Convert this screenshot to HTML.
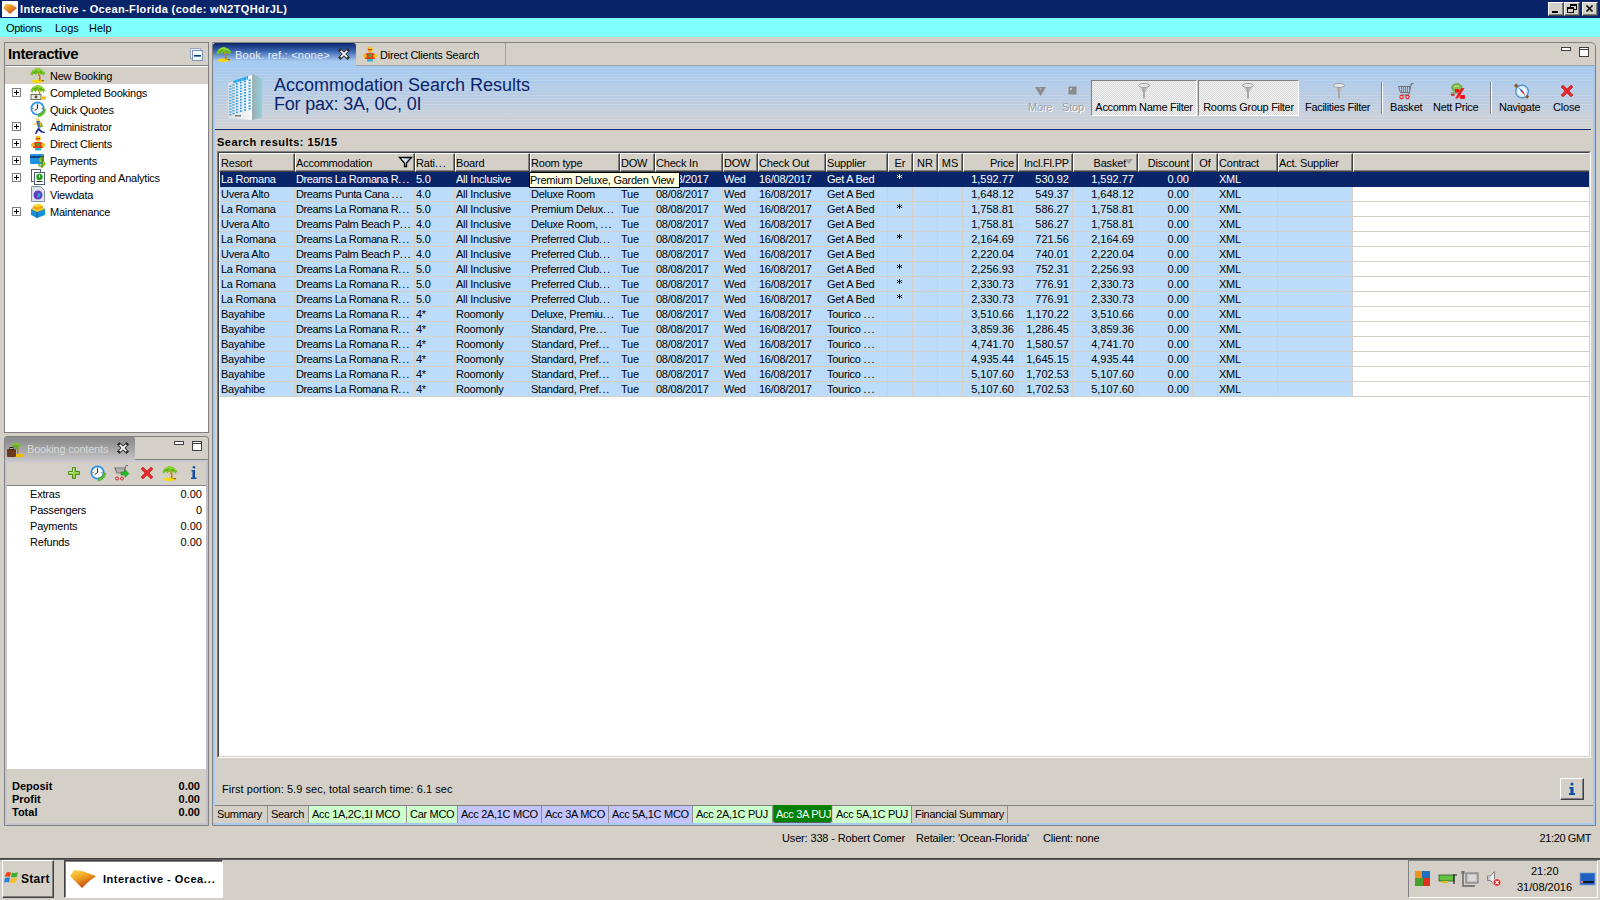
<!DOCTYPE html><html><head><meta charset="utf-8"><style>
*{margin:0;padding:0;box-sizing:border-box}
html,body{width:1600px;height:900px;overflow:hidden;background:#d4d0c8;font-family:"Liberation Sans",sans-serif;font-size:11px;color:#000}
.a{position:absolute}
.t{position:absolute;white-space:nowrap;line-height:11px;font-size:11px}
.b{font-weight:bold}
svg{position:absolute;overflow:visible}
</style></head><body>
<div class="a" style="left:0px;top:0px;width:1600px;height:18px;background:#0a246a"></div>
<div class="a" style="left:2px;top:1px;width:16px;height:16px;background:#fff"></div>
<svg style="left:2px;top:1px" width="16" height="16"><defs><linearGradient id="og" x1="0" y1="0" x2="1" y2="1"><stop offset="0" stop-color="#ffd040"/><stop offset="1" stop-color="#c04010"/></linearGradient></defs><path d="M1 7 L4 3 L10 3.5 L15 7 L8 13 Z" fill="url(#og)"/></svg>
<div class="t b" style="left:20px;top:4px;color:#fff;letter-spacing:0.35px">Interactive - Ocean-Florida (code: wN2TQHdrJL)</div>
<div class="a" style="left:1548px;top:2px;width:16px;height:14px;background:#d4d0c8;border-top:1px solid #fff;border-left:1px solid #fff;border-right:1px solid #404040;border-bottom:1px solid #404040;box-shadow:inset -1px -1px 0 #808080"></div>
<div class="a" style="left:1564px;top:2px;width:16px;height:14px;background:#d4d0c8;border-top:1px solid #fff;border-left:1px solid #fff;border-right:1px solid #404040;border-bottom:1px solid #404040;box-shadow:inset -1px -1px 0 #808080"></div>
<div class="a" style="left:1582px;top:2px;width:16px;height:14px;background:#d4d0c8;border-top:1px solid #fff;border-left:1px solid #fff;border-right:1px solid #404040;border-bottom:1px solid #404040;box-shadow:inset -1px -1px 0 #808080"></div>
<svg style="left:1548px;top:2px" width="16" height="14"><rect x="4" y="9" width="6" height="2" fill="#000"/></svg>
<svg style="left:1564px;top:2px" width="16" height="14"><rect x="6.5" y="2.5" width="6" height="5" fill="none" stroke="#000"/><rect x="6" y="2" width="7" height="2" fill="#000"/><rect x="3.5" y="5.5" width="6" height="5" fill="#d4d0c8" stroke="#000"/><rect x="3" y="5" width="7" height="2" fill="#000"/></svg>
<svg style="left:1582px;top:2px" width="16" height="14"><path d="M4.5 3.5 L10.5 9.5 M10.5 3.5 L4.5 9.5" stroke="#000" stroke-width="1.6"/></svg>
<div class="a" style="left:0px;top:18px;width:1600px;height:19px;background:#80ffff"></div>
<div class="t " style="left:6px;top:23px;letter-spacing:-0.3px">Options</div>
<div class="t " style="left:55px;top:23px;">Logs</div>
<div class="t " style="left:89px;top:23px;">Help</div>
<div class="a" style="left:4px;top:42px;width:205px;height:391px;border:1px solid #808080;background:#d4d0c8"></div>
<div class="a" style="left:5px;top:66px;width:203px;height:366px;background:#fff"></div>
<div class="a" style="left:5px;top:65px;width:203px;height:1px;background:#808080"></div>
<div class="t b" style="left:8px;top:46px;font-size:15px;line-height:15px;letter-spacing:-0.45px">Interactive</div>
<svg style="left:190px;top:48px" width="14" height="14"><rect x="0.5" y="0.5" width="10" height="10" fill="#e0f4ff" stroke="#99a8c4"/><rect x="2.5" y="2.5" width="10" height="10" fill="#f0faff" stroke="#8090b0"/><rect x="4" y="7" width="7" height="1.6" fill="#0a3a7a"/></svg>
<div class="a" style="left:5px;top:67px;width:203px;height:17px;background:#d4d0c8"></div>
<div class="t " style="left:50px;top:71px;letter-spacing:-0.25px">New Booking</div>
<svg style="left:30px;top:67px" width="16" height="16" viewBox="0 0 16 16"><path d="M1 14 Q8 11.5 15 13.5 Q12 16 8 16 Q3 16 1 14Z" fill="#f8d800"/><path d="M11 13.5 L14 13 L13 14.5Z" fill="#503010"/><path d="M7.5 6 Q9.5 9 9 14 L10.5 14 Q11 9 9 6Z" fill="#d08818"/><path d="M9 8.5 L10 9.5 M9.2 11 L10.2 12" stroke="#904010" stroke-width="0.8"/><path d="M0.5 8 Q1 2.5 7 1 Q13.5 1 15.5 7.5 L14 7 L13.5 9.5 L12 6.5 L10.5 8 L9 6 L7 6.5 L5.5 8.5 L4.5 6.5 L3 7 L2 9.5 L1.5 7.5Z" fill="#70c020"/><path d="M3 4 Q6 1.5 9 2 M8 3 Q12 2.5 14 5" stroke="#a0e050" stroke-width="1" fill="none"/><path d="M4 6 L6 4 M10 4 L12 6" stroke="#4a9010" stroke-width="0.8"/></svg>
<div class="t " style="left:50px;top:88px;letter-spacing:-0.25px">Completed Bookings</div>
<svg style="left:12px;top:88px" width="9" height="9"><rect x="0.5" y="0.5" width="8" height="8" fill="#fff" stroke="#808080"/><path d="M2 4.5 H7 M4.5 2 V7" stroke="#000"/></svg>
<svg style="left:30px;top:84px" width="16" height="16" viewBox="0 0 16 16"><path d="M7.5 6 Q9.5 8 9 11 L10.5 11 Q11 8 9 6Z" fill="#d08818"/><path d="M0.5 8 Q1 2.5 7 1 Q13.5 1 15.5 7.5 L14 7 L13.5 9.5 L12 6.5 L10.5 8 L9 6 L7 6.5 L5.5 8.5 L4.5 6.5 L3 7 L2 9.5 L1.5 7.5Z" fill="#70c020"/><path d="M3 4 Q6 1.5 9 2 M8 3 Q12 2.5 14 5" stroke="#a0e050" stroke-width="1" fill="none"/><path d="M4 6 L6 4 M10 4 L12 6" stroke="#4a9010" stroke-width="0.8"/><rect x="1" y="10.5" width="10" height="5" fill="#e8e8d8" stroke="#707060" stroke-width="1"/><circle cx="6" cy="13" r="1.4" fill="#505040"/><path d="M11 12.5 H16 V15.5 H11Z" fill="#f0c000"/></svg>
<div class="t " style="left:50px;top:105px;letter-spacing:-0.25px">Quick Quotes</div>
<svg style="left:30px;top:101px" width="16" height="16" viewBox="0 0 16 16"><circle cx="7.5" cy="7.5" r="7" fill="#1a90f0"/><circle cx="7.5" cy="7.5" r="5.3" fill="#fafafa" stroke="#b8c8d8" stroke-width="0.6"/><path d="M7.5 3.5 V7.5 L4.8 9.5" stroke="#202020" fill="none" stroke-width="1"/><circle cx="7.5" cy="3" r="0.6" fill="#404040"/><circle cx="3" cy="7.5" r="0.6" fill="#404040"/><circle cx="12" cy="7.5" r="0.6" fill="#404040"/><path d="M15.5 8 Q15.5 13 11 15 L8 16 L9 12.5 L12 12 Q13.5 10.5 13.5 8Z" fill="#60c828" stroke="#389010" stroke-width="0.5"/></svg>
<div class="t " style="left:50px;top:122px;letter-spacing:-0.25px">Administrator</div>
<svg style="left:12px;top:122px" width="9" height="9"><rect x="0.5" y="0.5" width="8" height="8" fill="#fff" stroke="#808080"/><path d="M2 4.5 H7 M4.5 2 V7" stroke="#000"/></svg>
<svg style="left:30px;top:118px" width="16" height="16" viewBox="0 0 16 16"><path d="M6 0 L9 1 L10 3 L7 3Z" fill="#f8c828"/><path d="M6 3 L10 3 L12 9 L8 10Z" fill="#4870b0"/><path d="M9 4 L12 5 L13 9 L10 9Z" fill="#60a838"/><path d="M10 4 L11 8" stroke="#f0c020" stroke-width="1.2"/><path d="M3 6 L7 5 L7 6.5 L3 7Z" fill="#f8c828"/><path d="M8 10 L6 13 L5 16 L6.5 16 L8 13 L10 11Z" fill="#1a2a90"/><path d="M9 10 L12 13 L15 14 L15 15 L11 14.5 L8 12Z" fill="#1a2a90"/></svg>
<div class="t " style="left:50px;top:139px;letter-spacing:-0.25px">Direct Clients</div>
<svg style="left:12px;top:139px" width="9" height="9"><rect x="0.5" y="0.5" width="8" height="8" fill="#fff" stroke="#808080"/><path d="M2 4.5 H7 M4.5 2 V7" stroke="#000"/></svg>
<svg style="left:30px;top:135px" width="16" height="16" viewBox="0 0 16 16"><circle cx="8" cy="3.5" r="2.8" fill="#f8c020"/><rect x="6" y="3" width="4" height="1.2" fill="#c04010"/><path d="M3 8 Q8 5.5 13 8 L13 13 L3 13Z" fill="#f03818"/><circle cx="2.8" cy="10" r="2" fill="#f8c020"/><circle cx="13.2" cy="10" r="2" fill="#f8c020"/><rect x="6.5" y="8" width="3.5" height="3" fill="#38b030"/><rect x="5" y="13" width="6" height="2.5" fill="#28b8c8"/></svg>
<div class="t " style="left:50px;top:156px;letter-spacing:-0.25px">Payments</div>
<svg style="left:12px;top:156px" width="9" height="9"><rect x="0.5" y="0.5" width="8" height="8" fill="#fff" stroke="#808080"/><path d="M2 4.5 H7 M4.5 2 V7" stroke="#000"/></svg>
<svg style="left:30px;top:152px" width="16" height="16" viewBox="0 0 16 16"><rect x="0" y="2" width="14" height="10" rx="1" fill="#2090e0"/><rect x="0" y="4" width="14" height="2" fill="#104080"/><path d="M13 5 Q9 5 9 8 Q9 10 12 10.5 Q14 11 13 13 Q11 14 9 12 L8 13.5 Q10 15.5 13 14.5 Q16 13 15 10.5 Q14 9 11.5 8.5 Q10.5 8 11 7 Q12 6 14 7Z" fill="#a8d828" stroke="#5a8a10" stroke-width="0.5"/><rect x="11.5" y="3.5" width="1.2" height="12.5" fill="#5a8a10"/></svg>
<div class="t " style="left:50px;top:173px;letter-spacing:-0.25px">Reporting and Analytics</div>
<svg style="left:12px;top:173px" width="9" height="9"><rect x="0.5" y="0.5" width="8" height="8" fill="#fff" stroke="#808080"/><path d="M2 4.5 H7 M4.5 2 V7" stroke="#000"/></svg>
<svg style="left:30px;top:169px" width="16" height="16" viewBox="0 0 16 16"><rect x="1.5" y="0.5" width="9" height="12" fill="#fff" stroke="#506070"/><rect x="4.5" y="3.5" width="10" height="12" fill="#fff" stroke="#506070"/><circle cx="9.5" cy="8" r="3.2" fill="#20a020"/><rect x="9" y="6" width="1" height="2.5" fill="#fff"/><rect x="6.5" y="12" width="6" height="1" fill="#303030"/></svg>
<div class="t " style="left:50px;top:190px;letter-spacing:-0.25px">Viewdata</div>
<svg style="left:30px;top:186px" width="16" height="16" viewBox="0 0 16 16"><path d="M1.5 0.5 H10.5 L14.5 4.5 V15.5 H1.5Z" fill="#dde4ee" stroke="#8090a0"/><circle cx="8" cy="9" r="4.5" fill="#6040c0"/><path d="M6 6 Q9 7 8 9 Q6 10 8 12 Q10 11 11 8" fill="#30a0e0"/></svg>
<div class="t " style="left:50px;top:207px;letter-spacing:-0.25px">Maintenance</div>
<svg style="left:12px;top:207px" width="9" height="9"><rect x="0.5" y="0.5" width="8" height="8" fill="#fff" stroke="#808080"/><path d="M2 4.5 H7 M4.5 2 V7" stroke="#000"/></svg>
<svg style="left:30px;top:203px" width="16" height="16" viewBox="0 0 16 16"><path d="M1 6 L10 3 L15 6 L15 12 L7 15 L1 12Z" fill="#1890d8"/><path d="M1 6 L10 3 L15 6 L7 9Z" fill="#f8c820"/><path d="M2 4 L10 1.5 L14 4 L7 7Z" fill="#f0a010"/><path d="M3 2 L9 0.5 L13 2.5 L7 4.5Z" fill="#f8d830"/><path d="M7 9 V15" stroke="#0a60a0"/></svg>
<div class="a" style="left:4px;top:436px;width:205px;height:390px;border:1px solid #808080;border-radius:3px 3px 0 0;background:#d4d0c8"></div>
<div class="a" style="left:5px;top:437px;width:130px;height:23px;background:linear-gradient(#8a8a8a,#9c9c9c 40%,#c4c4c4);border-radius:2px 2px 0 0"></div>
<div class="a" style="left:135px;top:459px;width:73px;height:1px;background:#808080"></div>
<svg style="left:7px;top:441px" width="16" height="16" viewBox="0 0 16 16"><path d="M6 7 Q8 2 12 4 Q9 5 9 8" fill="none" stroke="#60b020" stroke-width="2"/><path d="M5 4 Q9 1 14 5" stroke="#80c830" fill="none" stroke-width="1.5"/><rect x="10" y="6" width="1.5" height="8" fill="#c08020"/><rect x="0" y="8" width="9" height="8" rx="1" fill="#6a3a1a"/><rect x="3" y="6.5" width="3" height="2" fill="none" stroke="#3a2010"/><path d="M9 13 H16 V16 H9Z" fill="#f0c000"/></svg>
<div class="t " style="left:27px;top:444px;color:#d8d8d8;letter-spacing:-0.2px">Booking contents</div>
<svg style="left:117px;top:442px" width="12" height="12"><path d="M2.5 2.5 L9.5 9.5 M9.5 2.5 L2.5 9.5" stroke="#303030" stroke-width="3.6" stroke-linecap="square"/><path d="M2.8 2.8 L9.2 9.2 M9.2 2.8 L2.8 9.2" stroke="#fff" stroke-width="1.8"/></svg>
<svg style="left:174px;top:441px" width="30" height="12"><rect x="0.5" y="0.5" width="9" height="3" fill="#fff" stroke="#404040"/><rect x="18.5" y="0.5" width="9" height="9" fill="#fff" stroke="#404040"/><rect x="18.5" y="0.5" width="9" height="2" fill="#fff" stroke="#404040"/></svg>
<div class="a" style="left:5px;top:460px;width:203px;height:365px;border:2px solid #c8c6d0;border-right-color:#c0bec8"></div>
<div class="a" style="left:7px;top:486px;width:199px;height:283px;background:#fff"></div>
<div class="a" style="left:7px;top:485px;width:199px;height:1px;background:#808080"></div>
<svg style="left:66px;top:465px" width="16" height="16" viewBox="0 0 16 16"><path d="M6.5 2.5 H9.5 V6.5 H13.5 V9.5 H9.5 V13.5 H6.5 V9.5 H2.5 V6.5 H6.5Z" fill="#98d050" stroke="#4a8a20" stroke-width="1"/><path d="M7 3 H8 V7 H3 V8 H7Z" fill="#c8f090"/></svg>
<svg style="left:90px;top:465px" width="16" height="16" viewBox="0 0 16 16"><circle cx="7.5" cy="7.5" r="7" fill="#1a90f0"/><circle cx="7.5" cy="7.5" r="5.3" fill="#fafafa" stroke="#b8c8d8" stroke-width="0.6"/><path d="M7.5 3.5 V7.5 L4.8 9.5" stroke="#202020" fill="none" stroke-width="1"/><circle cx="7.5" cy="3" r="0.6" fill="#404040"/><circle cx="3" cy="7.5" r="0.6" fill="#404040"/><circle cx="12" cy="7.5" r="0.6" fill="#404040"/><path d="M15.5 8 Q15.5 13 11 15 L8 16 L9 12.5 L12 12 Q13.5 10.5 13.5 8Z" fill="#60c828" stroke="#389010" stroke-width="0.5"/></svg>
<svg style="left:114px;top:465px" width="16" height="16" viewBox="0 0 16 16"><path d="M1 3 H11 L10 8 H3Z" fill="none" stroke="#707070" stroke-width="1.2"/><path d="M3 4 V8 M5 4 V8 M7 4 V8 M9 4 V8" stroke="#909090"/><path d="M11 3 L12 0.5 H14" stroke="#707070" fill="none"/><circle cx="3" cy="13.5" r="1.5" fill="none" stroke="#e02020"/><circle cx="8" cy="13.5" r="1.5" fill="none" stroke="#e02020"/><path d="M7 7 H11 V4.5 L15 8.5 L11 12.5 V10 H7Z" fill="#20c020" stroke="#108010" stroke-width="0.5"/></svg>
<svg style="left:139px;top:465px" width="16" height="16" viewBox="0 0 16 16"><path d="M2 4 L4 2 L8 6 L12 2 L14 4 L10 8 L14 12 L12 14 L8 10 L4 14 L2 12 L6 8Z" fill="#e82828" stroke="#b01010" stroke-width="0.5"/></svg>
<svg style="left:162px;top:465px" width="16" height="16" viewBox="0 0 16 16"><path d="M1 14 Q8 11.5 15 13.5 Q12 16 8 16 Q3 16 1 14Z" fill="#f8d800"/><path d="M11 13.5 L14 13 L13 14.5Z" fill="#503010"/><path d="M7.5 6 Q9.5 9 9 14 L10.5 14 Q11 9 9 6Z" fill="#d08818"/><path d="M9 8.5 L10 9.5 M9.2 11 L10.2 12" stroke="#904010" stroke-width="0.8"/><path d="M0.5 8 Q1 2.5 7 1 Q13.5 1 15.5 7.5 L14 7 L13.5 9.5 L12 6.5 L10.5 8 L9 6 L7 6.5 L5.5 8.5 L4.5 6.5 L3 7 L2 9.5 L1.5 7.5Z" fill="#70c020"/><path d="M3 4 Q6 1.5 9 2 M8 3 Q12 2.5 14 5" stroke="#a0e050" stroke-width="1" fill="none"/><path d="M4 6 L6 4 M10 4 L12 6" stroke="#4a9010" stroke-width="0.8"/></svg>
<svg style="left:186px;top:465px" width="16" height="16" viewBox="0 0 16 16"><circle cx="8" cy="2.3" r="1.3" fill="#1050a8"/><path d="M5.5 5 H9 V12.5 H10.5 V14 H5 V12.5 H6.5 V6.5 H5.5Z" fill="#1050a8"/></svg>
<div class="t " style="left:30px;top:489px;letter-spacing:-0.2px">Extras</div>
<div class="t" style="right:1398px;top:489px">0.00</div>
<div class="t " style="left:30px;top:505px;letter-spacing:-0.2px">Passengers</div>
<div class="t" style="right:1398px;top:505px">0</div>
<div class="t " style="left:30px;top:521px;letter-spacing:-0.2px">Payments</div>
<div class="t" style="right:1398px;top:521px">0.00</div>
<div class="t " style="left:30px;top:537px;letter-spacing:-0.2px">Refunds</div>
<div class="t" style="right:1398px;top:537px">0.00</div>
<div class="t b" style="left:12px;top:781px;">Deposit</div>
<div class="t b" style="right:1400px;top:781px">0.00</div>
<div class="t b" style="left:12px;top:794px;">Profit</div>
<div class="t b" style="right:1400px;top:794px">0.00</div>
<div class="t b" style="left:12px;top:807px;">Total</div>
<div class="t b" style="right:1400px;top:807px">0.00</div>
<div class="a" style="left:212px;top:42px;width:1384px;height:784px;border:1px solid #808080;border-radius:0 5px 0 0;background:#d4d0c8"></div>
<div class="a" style="left:213px;top:65px;width:1382px;height:760px;border:2px solid #a6caf0;border-top:none;background:#d4d0c8"></div>
<div class="a" style="left:213px;top:65px;width:1382px;height:1px;background:#a6caf0"></div>
<div class="a" style="left:213px;top:43px;width:143px;height:23px;background:linear-gradient(#0a246a 0px,#3a64b0 8px,#a6caf0 18px,#a6caf0 23px);border-radius:3px 3px 0 0"></div>
<svg style="left:216px;top:46px" width="16" height="16" viewBox="0 0 16 16"><path d="M1 14 Q8 11.5 15 13.5 Q12 16 8 16 Q3 16 1 14Z" fill="#f8d800"/><path d="M11 13.5 L14 13 L13 14.5Z" fill="#503010"/><path d="M7.5 6 Q9.5 9 9 14 L10.5 14 Q11 9 9 6Z" fill="#d08818"/><path d="M9 8.5 L10 9.5 M9.2 11 L10.2 12" stroke="#904010" stroke-width="0.8"/><path d="M0.5 8 Q1 2.5 7 1 Q13.5 1 15.5 7.5 L14 7 L13.5 9.5 L12 6.5 L10.5 8 L9 6 L7 6.5 L5.5 8.5 L4.5 6.5 L3 7 L2 9.5 L1.5 7.5Z" fill="#70c020"/><path d="M3 4 Q6 1.5 9 2 M8 3 Q12 2.5 14 5" stroke="#a0e050" stroke-width="1" fill="none"/><path d="M4 6 L6 4 M10 4 L12 6" stroke="#4a9010" stroke-width="0.8"/></svg>
<div class="t " style="left:235px;top:50px;color:#e8eef8;letter-spacing:0.25px">Book. ref.: &lt;none&gt;</div>
<svg style="left:338px;top:48px" width="12" height="12"><path d="M2.5 2.5 L9.5 9.5 M9.5 2.5 L2.5 9.5" stroke="#303030" stroke-width="3.6" stroke-linecap="square"/><path d="M2.8 2.8 L9.2 9.2 M9.2 2.8 L2.8 9.2" stroke="#fff" stroke-width="1.8"/></svg>
<div class="a" style="left:356px;top:43px;width:150px;height:23px;border-right:1px solid #a0a0a0;border-bottom:1px solid #a0a0a0;background:#d4d0c8"></div>
<div class="a" style="left:505px;top:65px;width:1089px;height:1px;background:#a0a0a0"></div>
<svg style="left:362px;top:46px" width="16" height="16" viewBox="0 0 16 16"><circle cx="8" cy="3.5" r="2.8" fill="#f8c020"/><rect x="6" y="3" width="4" height="1.2" fill="#c04010"/><path d="M3 8 Q8 5.5 13 8 L13 13 L3 13Z" fill="#f03818"/><circle cx="2.8" cy="10" r="2" fill="#f8c020"/><circle cx="13.2" cy="10" r="2" fill="#f8c020"/><rect x="6.5" y="8" width="3.5" height="3" fill="#38b030"/><rect x="5" y="13" width="6" height="2.5" fill="#28b8c8"/></svg>
<div class="t " style="left:380px;top:50px;letter-spacing:-0.2px">Direct Clients Search</div>
<svg style="left:1561px;top:47px" width="30" height="12"><rect x="0.5" y="0.5" width="9" height="3" fill="#fff" stroke="#404040"/><rect x="18.5" y="0.5" width="9" height="9" fill="#fff" stroke="#404040"/><rect x="18.5" y="0.5" width="9" height="2" fill="#fff" stroke="#404040"/></svg>
<div class="a" style="left:215px;top:66px;width:1378px;height:63px;background:linear-gradient(#a6caf0,#b8cce4 45%,#d2d2d4);"></div>
<div class="a" style="left:215px;top:66px;width:1378px;height:63px;background:repeating-linear-gradient(#0000 0px,#0000 2px,rgba(255,255,255,0.12) 2px,rgba(255,255,255,0.12) 3px)"></div>
<div class="a" style="left:215px;top:129px;width:1376px;height:1px;background:#0a246a"></div>
<svg style="left:226px;top:73px" width="38" height="49"><defs><linearGradient id="bside" x1="0" x2="1"><stop offset="0" stop-color="#a0acb0"/><stop offset="1" stop-color="#90d0dc"/></linearGradient><linearGradient id="bfront" x1="0" x2="1"><stop offset="0" stop-color="#d8dcdc"/><stop offset="1" stop-color="#f8fafa"/></linearGradient></defs><path d="M2 10 L26 2 L26 47 L2 45Z" fill="url(#bfront)"/><path d="M26 2 L27 1 L36 6 L36 44 L27 47 L26 47Z" fill="url(#bside)"/><path d="M7 8 L22 3 L22 6.5 L7 10.5Z" fill="#28a8f0"/><rect x="3.2" y="12.5" width="2.2" height="1.5" fill="#2898e0"/><rect x="3.2" y="15.3" width="2.2" height="1.5" fill="#2898e0"/><rect x="3.2" y="18.2" width="2.2" height="1.5" fill="#2898e0"/><rect x="3.2" y="21.1" width="2.2" height="1.5" fill="#2898e0"/><rect x="3.2" y="23.9" width="2.2" height="1.5" fill="#2898e0"/><rect x="3.2" y="26.8" width="2.2" height="1.5" fill="#2898e0"/><rect x="3.2" y="29.6" width="2.2" height="1.5" fill="#2898e0"/><rect x="3.2" y="32.5" width="2.2" height="1.5" fill="#2898e0"/><rect x="3.2" y="35.3" width="2.2" height="1.5" fill="#2898e0"/><rect x="3.2" y="38.2" width="2.2" height="1.5" fill="#2898e0"/><rect x="3.2" y="41.0" width="2.2" height="1.5" fill="#2898e0"/><rect x="6.4" y="11.3" width="2.2" height="1.5" fill="#2898e0"/><rect x="6.4" y="14.2" width="2.2" height="1.5" fill="#2898e0"/><rect x="6.4" y="17.0" width="2.2" height="1.5" fill="#2898e0"/><rect x="6.4" y="19.9" width="2.2" height="1.5" fill="#2898e0"/><rect x="6.4" y="22.7" width="2.2" height="1.5" fill="#2898e0"/><rect x="6.4" y="25.6" width="2.2" height="1.5" fill="#2898e0"/><rect x="6.4" y="28.4" width="2.2" height="1.5" fill="#2898e0"/><rect x="6.4" y="31.2" width="2.2" height="1.5" fill="#2898e0"/><rect x="6.4" y="34.1" width="2.2" height="1.5" fill="#2898e0"/><rect x="6.4" y="37.0" width="2.2" height="1.5" fill="#2898e0"/><rect x="6.4" y="39.8" width="2.2" height="1.5" fill="#2898e0"/><rect x="10" y="10.1" width="2.2" height="1.5" fill="#2898e0"/><rect x="10" y="12.9" width="2.2" height="1.5" fill="#2898e0"/><rect x="10" y="15.8" width="2.2" height="1.5" fill="#2898e0"/><rect x="10" y="18.6" width="2.2" height="1.5" fill="#2898e0"/><rect x="10" y="21.5" width="2.2" height="1.5" fill="#2898e0"/><rect x="10" y="24.4" width="2.2" height="1.5" fill="#2898e0"/><rect x="10" y="27.2" width="2.2" height="1.5" fill="#2898e0"/><rect x="10" y="30.0" width="2.2" height="1.5" fill="#2898e0"/><rect x="10" y="32.9" width="2.2" height="1.5" fill="#2898e0"/><rect x="10" y="35.8" width="2.2" height="1.5" fill="#2898e0"/><rect x="10" y="38.6" width="2.2" height="1.5" fill="#2898e0"/><rect x="14" y="8.9" width="2.2" height="1.5" fill="#2898e0"/><rect x="14" y="11.8" width="2.2" height="1.5" fill="#2898e0"/><rect x="14" y="14.6" width="2.2" height="1.5" fill="#2898e0"/><rect x="14" y="17.5" width="2.2" height="1.5" fill="#2898e0"/><rect x="14" y="20.3" width="2.2" height="1.5" fill="#2898e0"/><rect x="14" y="23.1" width="2.2" height="1.5" fill="#2898e0"/><rect x="14" y="26.0" width="2.2" height="1.5" fill="#2898e0"/><rect x="14" y="28.9" width="2.2" height="1.5" fill="#2898e0"/><rect x="14" y="31.7" width="2.2" height="1.5" fill="#2898e0"/><rect x="14" y="34.6" width="2.2" height="1.5" fill="#2898e0"/><rect x="14" y="37.4" width="2.2" height="1.5" fill="#2898e0"/><rect x="18" y="7.7" width="2.2" height="1.5" fill="#2898e0"/><rect x="18" y="10.6" width="2.2" height="1.5" fill="#2898e0"/><rect x="18" y="13.4" width="2.2" height="1.5" fill="#2898e0"/><rect x="18" y="16.2" width="2.2" height="1.5" fill="#2898e0"/><rect x="18" y="19.1" width="2.2" height="1.5" fill="#2898e0"/><rect x="18" y="21.9" width="2.2" height="1.5" fill="#2898e0"/><rect x="18" y="24.8" width="2.2" height="1.5" fill="#2898e0"/><rect x="18" y="27.6" width="2.2" height="1.5" fill="#2898e0"/><rect x="18" y="30.5" width="2.2" height="1.5" fill="#2898e0"/><rect x="18" y="33.4" width="2.2" height="1.5" fill="#2898e0"/><rect x="18" y="36.2" width="2.2" height="1.5" fill="#2898e0"/><rect x="22.5" y="6.5" width="2.2" height="1.5" fill="#2898e0"/><rect x="22.5" y="9.3" width="2.2" height="1.5" fill="#2898e0"/><rect x="22.5" y="12.2" width="2.2" height="1.5" fill="#2898e0"/><rect x="22.5" y="15.1" width="2.2" height="1.5" fill="#2898e0"/><rect x="22.5" y="17.9" width="2.2" height="1.5" fill="#2898e0"/><rect x="22.5" y="20.8" width="2.2" height="1.5" fill="#2898e0"/><rect x="22.5" y="23.6" width="2.2" height="1.5" fill="#2898e0"/><rect x="22.5" y="26.4" width="2.2" height="1.5" fill="#2898e0"/><rect x="22.5" y="29.3" width="2.2" height="1.5" fill="#2898e0"/><rect x="22.5" y="32.2" width="2.2" height="1.5" fill="#2898e0"/><rect x="22.5" y="35.0" width="2.2" height="1.5" fill="#2898e0"/><rect x="9" y="42" width="6" height="1.5" fill="#707070"/><path d="M4 10 V45 M8 9 V45 M12 7.5 V46 M16 6 V46 M20.5 4.5 V46" stroke="#ffffff" stroke-width="0.6" opacity="0.6"/></svg>
<div class="t " style="left:274px;top:76px;font-size:18px;line-height:18px;color:#0a246a;letter-spacing:0px">Accommodation Search Results</div>
<div class="t " style="left:274px;top:95px;font-size:18px;line-height:18px;color:#0a246a;letter-spacing:-0.2px">For pax: 3A, 0C, 0I</div>
<div class="t b" style="left:217px;top:137px;letter-spacing:0.5px">Search results: 15/15</div>
<div class="a" style="left:217px;top:151px;width:1374px;height:607px;border:1px solid;border-color:#808080 #fff #fff #808080;background:#fff"></div>
<div class="a" style="left:218px;top:152px;width:1372px;height:605px;border:1px solid;border-color:#404040 #d4d0c8 #d4d0c8 #404040;background:#fff"></div>
<div class="a" style="left:219px;top:153px;width:1370px;height:19px;background:#d4d0c8"></div>
<div class="a" style="left:219px;top:153px;width:76px;height:19px;border-left:1px solid #fff;border-top:1px solid #fff;border-right:1px solid #404040;border-bottom:1px solid #404040;box-shadow:inset -1px -1px 0 #808080"></div>
<div class="t " style="left:221px;top:158px;letter-spacing:-0.2px">Resort</div>
<div class="a" style="left:295px;top:153px;width:120px;height:19px;border-left:1px solid #fff;border-top:1px solid #fff;border-right:1px solid #404040;border-bottom:1px solid #404040;box-shadow:inset -1px -1px 0 #808080"></div>
<div class="t " style="left:296px;top:158px;letter-spacing:-0.2px">Accommodation</div>
<div class="a" style="left:415px;top:153px;width:40px;height:19px;border-left:1px solid #fff;border-top:1px solid #fff;border-right:1px solid #404040;border-bottom:1px solid #404040;box-shadow:inset -1px -1px 0 #808080"></div>
<div class="t " style="left:416px;top:158px;letter-spacing:-0.2px">Rati<span style="letter-spacing:0.9px">..</span>.</div>
<div class="a" style="left:455px;top:153px;width:75px;height:19px;border-left:1px solid #fff;border-top:1px solid #fff;border-right:1px solid #404040;border-bottom:1px solid #404040;box-shadow:inset -1px -1px 0 #808080"></div>
<div class="t " style="left:456px;top:158px;letter-spacing:-0.2px">Board</div>
<div class="a" style="left:530px;top:153px;width:90px;height:19px;border-left:1px solid #fff;border-top:1px solid #fff;border-right:1px solid #404040;border-bottom:1px solid #404040;box-shadow:inset -1px -1px 0 #808080"></div>
<div class="t " style="left:531px;top:158px;letter-spacing:-0.2px">Room type</div>
<div class="a" style="left:620px;top:153px;width:35px;height:19px;border-left:1px solid #fff;border-top:1px solid #fff;border-right:1px solid #404040;border-bottom:1px solid #404040;box-shadow:inset -1px -1px 0 #808080"></div>
<div class="t " style="left:621px;top:158px;letter-spacing:-0.2px">DOW</div>
<div class="a" style="left:655px;top:153px;width:68px;height:19px;border-left:1px solid #fff;border-top:1px solid #fff;border-right:1px solid #404040;border-bottom:1px solid #404040;box-shadow:inset -1px -1px 0 #808080"></div>
<div class="t " style="left:656px;top:158px;letter-spacing:-0.2px">Check In</div>
<div class="a" style="left:723px;top:153px;width:35px;height:19px;border-left:1px solid #fff;border-top:1px solid #fff;border-right:1px solid #404040;border-bottom:1px solid #404040;box-shadow:inset -1px -1px 0 #808080"></div>
<div class="t " style="left:724px;top:158px;letter-spacing:-0.2px">DOW</div>
<div class="a" style="left:758px;top:153px;width:68px;height:19px;border-left:1px solid #fff;border-top:1px solid #fff;border-right:1px solid #404040;border-bottom:1px solid #404040;box-shadow:inset -1px -1px 0 #808080"></div>
<div class="t " style="left:759px;top:158px;letter-spacing:-0.2px">Check Out</div>
<div class="a" style="left:826px;top:153px;width:62px;height:19px;border-left:1px solid #fff;border-top:1px solid #fff;border-right:1px solid #404040;border-bottom:1px solid #404040;box-shadow:inset -1px -1px 0 #808080"></div>
<div class="t " style="left:827px;top:158px;letter-spacing:-0.2px">Supplier</div>
<div class="a" style="left:888px;top:153px;width:25px;height:19px;border-left:1px solid #fff;border-top:1px solid #fff;border-right:1px solid #404040;border-bottom:1px solid #404040;box-shadow:inset -1px -1px 0 #808080"></div>
<div class="t" style="left:888px;width:24px;text-align:center;top:158px">Er</div>
<div class="a" style="left:913px;top:153px;width:25px;height:19px;border-left:1px solid #fff;border-top:1px solid #fff;border-right:1px solid #404040;border-bottom:1px solid #404040;box-shadow:inset -1px -1px 0 #808080"></div>
<div class="t" style="left:913px;width:24px;text-align:center;top:158px">NR</div>
<div class="a" style="left:938px;top:153px;width:25px;height:19px;border-left:1px solid #fff;border-top:1px solid #fff;border-right:1px solid #404040;border-bottom:1px solid #404040;box-shadow:inset -1px -1px 0 #808080"></div>
<div class="t" style="left:938px;width:24px;text-align:center;top:158px">MS</div>
<div class="a" style="left:963px;top:153px;width:55px;height:19px;border-left:1px solid #fff;border-top:1px solid #fff;border-right:1px solid #404040;border-bottom:1px solid #404040;box-shadow:inset -1px -1px 0 #808080"></div>
<div class="t" style="right:586px;top:158px;letter-spacing:-0.2px">Price</div>
<div class="a" style="left:1018px;top:153px;width:55px;height:19px;border-left:1px solid #fff;border-top:1px solid #fff;border-right:1px solid #404040;border-bottom:1px solid #404040;box-shadow:inset -1px -1px 0 #808080"></div>
<div class="t" style="right:531px;top:158px;letter-spacing:-0.2px">Incl.Fl.PP</div>
<div class="a" style="left:1073px;top:153px;width:65px;height:19px;border-left:1px solid #fff;border-top:1px solid #fff;border-right:1px solid #404040;border-bottom:1px solid #404040;box-shadow:inset -1px -1px 0 #808080"></div>
<div class="t" style="right:474px;top:158px;letter-spacing:-0.2px">Basket</div>
<div class="a" style="left:1138px;top:153px;width:55px;height:19px;border-left:1px solid #fff;border-top:1px solid #fff;border-right:1px solid #404040;border-bottom:1px solid #404040;box-shadow:inset -1px -1px 0 #808080"></div>
<div class="t" style="right:411px;top:158px;letter-spacing:-0.2px">Discount</div>
<div class="a" style="left:1193px;top:153px;width:25px;height:19px;border-left:1px solid #fff;border-top:1px solid #fff;border-right:1px solid #404040;border-bottom:1px solid #404040;box-shadow:inset -1px -1px 0 #808080"></div>
<div class="t" style="left:1193px;width:24px;text-align:center;top:158px">Of</div>
<div class="a" style="left:1218px;top:153px;width:60px;height:19px;border-left:1px solid #fff;border-top:1px solid #fff;border-right:1px solid #404040;border-bottom:1px solid #404040;box-shadow:inset -1px -1px 0 #808080"></div>
<div class="t " style="left:1219px;top:158px;letter-spacing:-0.2px">Contract</div>
<div class="a" style="left:1278px;top:153px;width:75px;height:19px;border-left:1px solid #fff;border-top:1px solid #fff;border-right:1px solid #404040;border-bottom:1px solid #404040;box-shadow:inset -1px -1px 0 #808080"></div>
<div class="t " style="left:1279px;top:158px;letter-spacing:-0.2px">Act. Supplier</div>
<div class="a" style="left:1353px;top:153px;width:236px;height:19px;border-left:1px solid #fff;border-top:1px solid #fff;border-bottom:1px solid #404040;box-shadow:inset 0 -1px 0 #808080"></div>
<svg style="left:398px;top:156px" width="16" height="13"><defs><linearGradient id="hf" x1="0" x2="1"><stop offset="0" stop-color="#ffffff"/><stop offset="0.6" stop-color="#c8d8e8"/><stop offset="1" stop-color="#90b0d8"/></linearGradient></defs><path d="M1.5 1.5 H13.5 L8.5 7 V10.5 H6.5 V7Z" fill="url(#hf)" stroke="#000" stroke-width="1.3" stroke-linejoin="miter"/></svg>
<svg style="left:1125px;top:159px" width="9" height="6"><path d="M0 0 H8 L4 5Z" fill="#a0a0a0"/></svg>
<div class="a" style="left:220px;top:172px;width:1369px;height:15px;background:#0a246a"></div>
<div class="t " style="left:221px;top:174px;color:#fff;letter-spacing:-0.25px;width:73px;overflow:hidden">La Romana</div>
<div class="t " style="left:296px;top:174px;color:#fff;letter-spacing:-0.4px;width:117px;overflow:hidden">Dreams La Romana R<span style="letter-spacing:0.9px">..</span>.</div>
<div class="t " style="left:416px;top:174px;color:#fff;letter-spacing:-0.25px;width:37px;overflow:hidden">5.0</div>
<div class="t " style="left:456px;top:174px;color:#fff;letter-spacing:-0.25px;width:72px;overflow:hidden">All Inclusive</div>
<div class="t " style="left:531px;top:174px;color:#fff;letter-spacing:-0.25px;width:87px;overflow:hidden">Premium Delux<span style="letter-spacing:0.9px">..</span>.</div>
<div class="t " style="left:621px;top:174px;color:#fff;letter-spacing:-0.25px;width:32px;overflow:hidden">Tue</div>
<div class="t " style="left:656px;top:174px;color:#fff;letter-spacing:-0.25px;width:65px;overflow:hidden">08/08/2017</div>
<div class="t " style="left:724px;top:174px;color:#fff;letter-spacing:-0.25px;width:32px;overflow:hidden">Wed</div>
<div class="t " style="left:759px;top:174px;color:#fff;letter-spacing:-0.25px;width:65px;overflow:hidden">16/08/2017</div>
<div class="t " style="left:827px;top:174px;color:#fff;letter-spacing:-0.25px;width:59px;overflow:hidden">Get A Bed</div>
<svg style="left:897px;top:174px" width="5" height="5" shape-rendering="crispEdges"><path d="M2 0h1v5h-1z M0 1h1v1h-1z M4 1h1v1h-1z M0 3h1v1h-1z M4 3h1v1h-1z M1 2h3v1h-3z" fill="#fff"/></svg>
<div class="t" style="right:586px;top:174px;color:#fff">1,592.77</div>
<div class="t" style="right:531px;top:174px;color:#fff">530.92</div>
<div class="t" style="right:466px;top:174px;color:#fff">1,592.77</div>
<div class="t" style="right:411px;top:174px;color:#fff">0.00</div>
<div class="t " style="left:1219px;top:174px;color:#fff;letter-spacing:-0.25px;width:57px;overflow:hidden">XML</div>
<div class="a" style="left:220px;top:187px;width:1133px;height:15px;background:#bcdcfa"></div>
<div class="a" style="left:219px;top:201px;width:1370px;height:1px;background:#d4d0c8"></div>
<div class="a" style="left:294px;top:187px;width:1px;height:15px;background:#d4d0c8"></div>
<div class="a" style="left:414px;top:187px;width:1px;height:15px;background:#d4d0c8"></div>
<div class="a" style="left:454px;top:187px;width:1px;height:15px;background:#d4d0c8"></div>
<div class="a" style="left:529px;top:187px;width:1px;height:15px;background:#d4d0c8"></div>
<div class="a" style="left:619px;top:187px;width:1px;height:15px;background:#d4d0c8"></div>
<div class="a" style="left:654px;top:187px;width:1px;height:15px;background:#d4d0c8"></div>
<div class="a" style="left:722px;top:187px;width:1px;height:15px;background:#d4d0c8"></div>
<div class="a" style="left:757px;top:187px;width:1px;height:15px;background:#d4d0c8"></div>
<div class="a" style="left:825px;top:187px;width:1px;height:15px;background:#d4d0c8"></div>
<div class="a" style="left:887px;top:187px;width:1px;height:15px;background:#d4d0c8"></div>
<div class="a" style="left:912px;top:187px;width:1px;height:15px;background:#d4d0c8"></div>
<div class="a" style="left:937px;top:187px;width:1px;height:15px;background:#d4d0c8"></div>
<div class="a" style="left:962px;top:187px;width:1px;height:15px;background:#d4d0c8"></div>
<div class="a" style="left:1017px;top:187px;width:1px;height:15px;background:#d4d0c8"></div>
<div class="a" style="left:1072px;top:187px;width:1px;height:15px;background:#d4d0c8"></div>
<div class="a" style="left:1137px;top:187px;width:1px;height:15px;background:#d4d0c8"></div>
<div class="a" style="left:1192px;top:187px;width:1px;height:15px;background:#d4d0c8"></div>
<div class="a" style="left:1217px;top:187px;width:1px;height:15px;background:#d4d0c8"></div>
<div class="a" style="left:1277px;top:187px;width:1px;height:15px;background:#d4d0c8"></div>
<div class="a" style="left:1352px;top:187px;width:1px;height:15px;background:#d4d0c8"></div>
<div class="t " style="left:221px;top:189px;color:#000;letter-spacing:-0.25px;width:73px;overflow:hidden">Uvera Alto</div>
<div class="t " style="left:296px;top:189px;color:#000;letter-spacing:-0.4px;width:117px;overflow:hidden">Dreams Punta Cana <span style="letter-spacing:0.9px">..</span>.</div>
<div class="t " style="left:416px;top:189px;color:#000;letter-spacing:-0.25px;width:37px;overflow:hidden">4.0</div>
<div class="t " style="left:456px;top:189px;color:#000;letter-spacing:-0.25px;width:72px;overflow:hidden">All Inclusive</div>
<div class="t " style="left:531px;top:189px;color:#000;letter-spacing:-0.25px;width:87px;overflow:hidden">Deluxe Room</div>
<div class="t " style="left:621px;top:189px;color:#000;letter-spacing:-0.25px;width:32px;overflow:hidden">Tue</div>
<div class="t " style="left:656px;top:189px;color:#000;letter-spacing:-0.25px;width:65px;overflow:hidden">08/08/2017</div>
<div class="t " style="left:724px;top:189px;color:#000;letter-spacing:-0.25px;width:32px;overflow:hidden">Wed</div>
<div class="t " style="left:759px;top:189px;color:#000;letter-spacing:-0.25px;width:65px;overflow:hidden">16/08/2017</div>
<div class="t " style="left:827px;top:189px;color:#000;letter-spacing:-0.25px;width:59px;overflow:hidden">Get A Bed</div>
<div class="t" style="right:586px;top:189px;color:#000">1,648.12</div>
<div class="t" style="right:531px;top:189px;color:#000">549.37</div>
<div class="t" style="right:466px;top:189px;color:#000">1,648.12</div>
<div class="t" style="right:411px;top:189px;color:#000">0.00</div>
<div class="t " style="left:1219px;top:189px;color:#000;letter-spacing:-0.25px;width:57px;overflow:hidden">XML</div>
<div class="a" style="left:220px;top:202px;width:1133px;height:15px;background:#bcdcfa"></div>
<div class="a" style="left:219px;top:216px;width:1370px;height:1px;background:#d4d0c8"></div>
<div class="a" style="left:294px;top:202px;width:1px;height:15px;background:#d4d0c8"></div>
<div class="a" style="left:414px;top:202px;width:1px;height:15px;background:#d4d0c8"></div>
<div class="a" style="left:454px;top:202px;width:1px;height:15px;background:#d4d0c8"></div>
<div class="a" style="left:529px;top:202px;width:1px;height:15px;background:#d4d0c8"></div>
<div class="a" style="left:619px;top:202px;width:1px;height:15px;background:#d4d0c8"></div>
<div class="a" style="left:654px;top:202px;width:1px;height:15px;background:#d4d0c8"></div>
<div class="a" style="left:722px;top:202px;width:1px;height:15px;background:#d4d0c8"></div>
<div class="a" style="left:757px;top:202px;width:1px;height:15px;background:#d4d0c8"></div>
<div class="a" style="left:825px;top:202px;width:1px;height:15px;background:#d4d0c8"></div>
<div class="a" style="left:887px;top:202px;width:1px;height:15px;background:#d4d0c8"></div>
<div class="a" style="left:912px;top:202px;width:1px;height:15px;background:#d4d0c8"></div>
<div class="a" style="left:937px;top:202px;width:1px;height:15px;background:#d4d0c8"></div>
<div class="a" style="left:962px;top:202px;width:1px;height:15px;background:#d4d0c8"></div>
<div class="a" style="left:1017px;top:202px;width:1px;height:15px;background:#d4d0c8"></div>
<div class="a" style="left:1072px;top:202px;width:1px;height:15px;background:#d4d0c8"></div>
<div class="a" style="left:1137px;top:202px;width:1px;height:15px;background:#d4d0c8"></div>
<div class="a" style="left:1192px;top:202px;width:1px;height:15px;background:#d4d0c8"></div>
<div class="a" style="left:1217px;top:202px;width:1px;height:15px;background:#d4d0c8"></div>
<div class="a" style="left:1277px;top:202px;width:1px;height:15px;background:#d4d0c8"></div>
<div class="a" style="left:1352px;top:202px;width:1px;height:15px;background:#d4d0c8"></div>
<div class="t " style="left:221px;top:204px;color:#000;letter-spacing:-0.25px;width:73px;overflow:hidden">La Romana</div>
<div class="t " style="left:296px;top:204px;color:#000;letter-spacing:-0.4px;width:117px;overflow:hidden">Dreams La Romana R<span style="letter-spacing:0.9px">..</span>.</div>
<div class="t " style="left:416px;top:204px;color:#000;letter-spacing:-0.25px;width:37px;overflow:hidden">5.0</div>
<div class="t " style="left:456px;top:204px;color:#000;letter-spacing:-0.25px;width:72px;overflow:hidden">All Inclusive</div>
<div class="t " style="left:531px;top:204px;color:#000;letter-spacing:-0.25px;width:87px;overflow:hidden">Premium Delux<span style="letter-spacing:0.9px">..</span>.</div>
<div class="t " style="left:621px;top:204px;color:#000;letter-spacing:-0.25px;width:32px;overflow:hidden">Tue</div>
<div class="t " style="left:656px;top:204px;color:#000;letter-spacing:-0.25px;width:65px;overflow:hidden">08/08/2017</div>
<div class="t " style="left:724px;top:204px;color:#000;letter-spacing:-0.25px;width:32px;overflow:hidden">Wed</div>
<div class="t " style="left:759px;top:204px;color:#000;letter-spacing:-0.25px;width:65px;overflow:hidden">16/08/2017</div>
<div class="t " style="left:827px;top:204px;color:#000;letter-spacing:-0.25px;width:59px;overflow:hidden">Get A Bed</div>
<svg style="left:897px;top:204px" width="5" height="5" shape-rendering="crispEdges"><path d="M2 0h1v5h-1z M0 1h1v1h-1z M4 1h1v1h-1z M0 3h1v1h-1z M4 3h1v1h-1z M1 2h3v1h-3z" fill="#000"/></svg>
<div class="t" style="right:586px;top:204px;color:#000">1,758.81</div>
<div class="t" style="right:531px;top:204px;color:#000">586.27</div>
<div class="t" style="right:466px;top:204px;color:#000">1,758.81</div>
<div class="t" style="right:411px;top:204px;color:#000">0.00</div>
<div class="t " style="left:1219px;top:204px;color:#000;letter-spacing:-0.25px;width:57px;overflow:hidden">XML</div>
<div class="a" style="left:220px;top:217px;width:1133px;height:15px;background:#bcdcfa"></div>
<div class="a" style="left:219px;top:231px;width:1370px;height:1px;background:#d4d0c8"></div>
<div class="a" style="left:294px;top:217px;width:1px;height:15px;background:#d4d0c8"></div>
<div class="a" style="left:414px;top:217px;width:1px;height:15px;background:#d4d0c8"></div>
<div class="a" style="left:454px;top:217px;width:1px;height:15px;background:#d4d0c8"></div>
<div class="a" style="left:529px;top:217px;width:1px;height:15px;background:#d4d0c8"></div>
<div class="a" style="left:619px;top:217px;width:1px;height:15px;background:#d4d0c8"></div>
<div class="a" style="left:654px;top:217px;width:1px;height:15px;background:#d4d0c8"></div>
<div class="a" style="left:722px;top:217px;width:1px;height:15px;background:#d4d0c8"></div>
<div class="a" style="left:757px;top:217px;width:1px;height:15px;background:#d4d0c8"></div>
<div class="a" style="left:825px;top:217px;width:1px;height:15px;background:#d4d0c8"></div>
<div class="a" style="left:887px;top:217px;width:1px;height:15px;background:#d4d0c8"></div>
<div class="a" style="left:912px;top:217px;width:1px;height:15px;background:#d4d0c8"></div>
<div class="a" style="left:937px;top:217px;width:1px;height:15px;background:#d4d0c8"></div>
<div class="a" style="left:962px;top:217px;width:1px;height:15px;background:#d4d0c8"></div>
<div class="a" style="left:1017px;top:217px;width:1px;height:15px;background:#d4d0c8"></div>
<div class="a" style="left:1072px;top:217px;width:1px;height:15px;background:#d4d0c8"></div>
<div class="a" style="left:1137px;top:217px;width:1px;height:15px;background:#d4d0c8"></div>
<div class="a" style="left:1192px;top:217px;width:1px;height:15px;background:#d4d0c8"></div>
<div class="a" style="left:1217px;top:217px;width:1px;height:15px;background:#d4d0c8"></div>
<div class="a" style="left:1277px;top:217px;width:1px;height:15px;background:#d4d0c8"></div>
<div class="a" style="left:1352px;top:217px;width:1px;height:15px;background:#d4d0c8"></div>
<div class="t " style="left:221px;top:219px;color:#000;letter-spacing:-0.25px;width:73px;overflow:hidden">Uvera Alto</div>
<div class="t " style="left:296px;top:219px;color:#000;letter-spacing:-0.4px;width:117px;overflow:hidden">Dreams Palm Beach P<span style="letter-spacing:0.9px">..</span>.</div>
<div class="t " style="left:416px;top:219px;color:#000;letter-spacing:-0.25px;width:37px;overflow:hidden">4.0</div>
<div class="t " style="left:456px;top:219px;color:#000;letter-spacing:-0.25px;width:72px;overflow:hidden">All Inclusive</div>
<div class="t " style="left:531px;top:219px;color:#000;letter-spacing:-0.25px;width:87px;overflow:hidden">Deluxe Room, <span style="letter-spacing:0.9px">..</span>.</div>
<div class="t " style="left:621px;top:219px;color:#000;letter-spacing:-0.25px;width:32px;overflow:hidden">Tue</div>
<div class="t " style="left:656px;top:219px;color:#000;letter-spacing:-0.25px;width:65px;overflow:hidden">08/08/2017</div>
<div class="t " style="left:724px;top:219px;color:#000;letter-spacing:-0.25px;width:32px;overflow:hidden">Wed</div>
<div class="t " style="left:759px;top:219px;color:#000;letter-spacing:-0.25px;width:65px;overflow:hidden">16/08/2017</div>
<div class="t " style="left:827px;top:219px;color:#000;letter-spacing:-0.25px;width:59px;overflow:hidden">Get A Bed</div>
<div class="t" style="right:586px;top:219px;color:#000">1,758.81</div>
<div class="t" style="right:531px;top:219px;color:#000">586.27</div>
<div class="t" style="right:466px;top:219px;color:#000">1,758.81</div>
<div class="t" style="right:411px;top:219px;color:#000">0.00</div>
<div class="t " style="left:1219px;top:219px;color:#000;letter-spacing:-0.25px;width:57px;overflow:hidden">XML</div>
<div class="a" style="left:220px;top:232px;width:1133px;height:15px;background:#bcdcfa"></div>
<div class="a" style="left:219px;top:246px;width:1370px;height:1px;background:#d4d0c8"></div>
<div class="a" style="left:294px;top:232px;width:1px;height:15px;background:#d4d0c8"></div>
<div class="a" style="left:414px;top:232px;width:1px;height:15px;background:#d4d0c8"></div>
<div class="a" style="left:454px;top:232px;width:1px;height:15px;background:#d4d0c8"></div>
<div class="a" style="left:529px;top:232px;width:1px;height:15px;background:#d4d0c8"></div>
<div class="a" style="left:619px;top:232px;width:1px;height:15px;background:#d4d0c8"></div>
<div class="a" style="left:654px;top:232px;width:1px;height:15px;background:#d4d0c8"></div>
<div class="a" style="left:722px;top:232px;width:1px;height:15px;background:#d4d0c8"></div>
<div class="a" style="left:757px;top:232px;width:1px;height:15px;background:#d4d0c8"></div>
<div class="a" style="left:825px;top:232px;width:1px;height:15px;background:#d4d0c8"></div>
<div class="a" style="left:887px;top:232px;width:1px;height:15px;background:#d4d0c8"></div>
<div class="a" style="left:912px;top:232px;width:1px;height:15px;background:#d4d0c8"></div>
<div class="a" style="left:937px;top:232px;width:1px;height:15px;background:#d4d0c8"></div>
<div class="a" style="left:962px;top:232px;width:1px;height:15px;background:#d4d0c8"></div>
<div class="a" style="left:1017px;top:232px;width:1px;height:15px;background:#d4d0c8"></div>
<div class="a" style="left:1072px;top:232px;width:1px;height:15px;background:#d4d0c8"></div>
<div class="a" style="left:1137px;top:232px;width:1px;height:15px;background:#d4d0c8"></div>
<div class="a" style="left:1192px;top:232px;width:1px;height:15px;background:#d4d0c8"></div>
<div class="a" style="left:1217px;top:232px;width:1px;height:15px;background:#d4d0c8"></div>
<div class="a" style="left:1277px;top:232px;width:1px;height:15px;background:#d4d0c8"></div>
<div class="a" style="left:1352px;top:232px;width:1px;height:15px;background:#d4d0c8"></div>
<div class="t " style="left:221px;top:234px;color:#000;letter-spacing:-0.25px;width:73px;overflow:hidden">La Romana</div>
<div class="t " style="left:296px;top:234px;color:#000;letter-spacing:-0.4px;width:117px;overflow:hidden">Dreams La Romana R<span style="letter-spacing:0.9px">..</span>.</div>
<div class="t " style="left:416px;top:234px;color:#000;letter-spacing:-0.25px;width:37px;overflow:hidden">5.0</div>
<div class="t " style="left:456px;top:234px;color:#000;letter-spacing:-0.25px;width:72px;overflow:hidden">All Inclusive</div>
<div class="t " style="left:531px;top:234px;color:#000;letter-spacing:-0.25px;width:87px;overflow:hidden">Preferred Club<span style="letter-spacing:0.9px">..</span>.</div>
<div class="t " style="left:621px;top:234px;color:#000;letter-spacing:-0.25px;width:32px;overflow:hidden">Tue</div>
<div class="t " style="left:656px;top:234px;color:#000;letter-spacing:-0.25px;width:65px;overflow:hidden">08/08/2017</div>
<div class="t " style="left:724px;top:234px;color:#000;letter-spacing:-0.25px;width:32px;overflow:hidden">Wed</div>
<div class="t " style="left:759px;top:234px;color:#000;letter-spacing:-0.25px;width:65px;overflow:hidden">16/08/2017</div>
<div class="t " style="left:827px;top:234px;color:#000;letter-spacing:-0.25px;width:59px;overflow:hidden">Get A Bed</div>
<svg style="left:897px;top:234px" width="5" height="5" shape-rendering="crispEdges"><path d="M2 0h1v5h-1z M0 1h1v1h-1z M4 1h1v1h-1z M0 3h1v1h-1z M4 3h1v1h-1z M1 2h3v1h-3z" fill="#000"/></svg>
<div class="t" style="right:586px;top:234px;color:#000">2,164.69</div>
<div class="t" style="right:531px;top:234px;color:#000">721.56</div>
<div class="t" style="right:466px;top:234px;color:#000">2,164.69</div>
<div class="t" style="right:411px;top:234px;color:#000">0.00</div>
<div class="t " style="left:1219px;top:234px;color:#000;letter-spacing:-0.25px;width:57px;overflow:hidden">XML</div>
<div class="a" style="left:220px;top:247px;width:1133px;height:15px;background:#bcdcfa"></div>
<div class="a" style="left:219px;top:261px;width:1370px;height:1px;background:#d4d0c8"></div>
<div class="a" style="left:294px;top:247px;width:1px;height:15px;background:#d4d0c8"></div>
<div class="a" style="left:414px;top:247px;width:1px;height:15px;background:#d4d0c8"></div>
<div class="a" style="left:454px;top:247px;width:1px;height:15px;background:#d4d0c8"></div>
<div class="a" style="left:529px;top:247px;width:1px;height:15px;background:#d4d0c8"></div>
<div class="a" style="left:619px;top:247px;width:1px;height:15px;background:#d4d0c8"></div>
<div class="a" style="left:654px;top:247px;width:1px;height:15px;background:#d4d0c8"></div>
<div class="a" style="left:722px;top:247px;width:1px;height:15px;background:#d4d0c8"></div>
<div class="a" style="left:757px;top:247px;width:1px;height:15px;background:#d4d0c8"></div>
<div class="a" style="left:825px;top:247px;width:1px;height:15px;background:#d4d0c8"></div>
<div class="a" style="left:887px;top:247px;width:1px;height:15px;background:#d4d0c8"></div>
<div class="a" style="left:912px;top:247px;width:1px;height:15px;background:#d4d0c8"></div>
<div class="a" style="left:937px;top:247px;width:1px;height:15px;background:#d4d0c8"></div>
<div class="a" style="left:962px;top:247px;width:1px;height:15px;background:#d4d0c8"></div>
<div class="a" style="left:1017px;top:247px;width:1px;height:15px;background:#d4d0c8"></div>
<div class="a" style="left:1072px;top:247px;width:1px;height:15px;background:#d4d0c8"></div>
<div class="a" style="left:1137px;top:247px;width:1px;height:15px;background:#d4d0c8"></div>
<div class="a" style="left:1192px;top:247px;width:1px;height:15px;background:#d4d0c8"></div>
<div class="a" style="left:1217px;top:247px;width:1px;height:15px;background:#d4d0c8"></div>
<div class="a" style="left:1277px;top:247px;width:1px;height:15px;background:#d4d0c8"></div>
<div class="a" style="left:1352px;top:247px;width:1px;height:15px;background:#d4d0c8"></div>
<div class="t " style="left:221px;top:249px;color:#000;letter-spacing:-0.25px;width:73px;overflow:hidden">Uvera Alto</div>
<div class="t " style="left:296px;top:249px;color:#000;letter-spacing:-0.4px;width:117px;overflow:hidden">Dreams Palm Beach P<span style="letter-spacing:0.9px">..</span>.</div>
<div class="t " style="left:416px;top:249px;color:#000;letter-spacing:-0.25px;width:37px;overflow:hidden">4.0</div>
<div class="t " style="left:456px;top:249px;color:#000;letter-spacing:-0.25px;width:72px;overflow:hidden">All Inclusive</div>
<div class="t " style="left:531px;top:249px;color:#000;letter-spacing:-0.25px;width:87px;overflow:hidden">Preferred Club<span style="letter-spacing:0.9px">..</span>.</div>
<div class="t " style="left:621px;top:249px;color:#000;letter-spacing:-0.25px;width:32px;overflow:hidden">Tue</div>
<div class="t " style="left:656px;top:249px;color:#000;letter-spacing:-0.25px;width:65px;overflow:hidden">08/08/2017</div>
<div class="t " style="left:724px;top:249px;color:#000;letter-spacing:-0.25px;width:32px;overflow:hidden">Wed</div>
<div class="t " style="left:759px;top:249px;color:#000;letter-spacing:-0.25px;width:65px;overflow:hidden">16/08/2017</div>
<div class="t " style="left:827px;top:249px;color:#000;letter-spacing:-0.25px;width:59px;overflow:hidden">Get A Bed</div>
<div class="t" style="right:586px;top:249px;color:#000">2,220.04</div>
<div class="t" style="right:531px;top:249px;color:#000">740.01</div>
<div class="t" style="right:466px;top:249px;color:#000">2,220.04</div>
<div class="t" style="right:411px;top:249px;color:#000">0.00</div>
<div class="t " style="left:1219px;top:249px;color:#000;letter-spacing:-0.25px;width:57px;overflow:hidden">XML</div>
<div class="a" style="left:220px;top:262px;width:1133px;height:15px;background:#bcdcfa"></div>
<div class="a" style="left:219px;top:276px;width:1370px;height:1px;background:#d4d0c8"></div>
<div class="a" style="left:294px;top:262px;width:1px;height:15px;background:#d4d0c8"></div>
<div class="a" style="left:414px;top:262px;width:1px;height:15px;background:#d4d0c8"></div>
<div class="a" style="left:454px;top:262px;width:1px;height:15px;background:#d4d0c8"></div>
<div class="a" style="left:529px;top:262px;width:1px;height:15px;background:#d4d0c8"></div>
<div class="a" style="left:619px;top:262px;width:1px;height:15px;background:#d4d0c8"></div>
<div class="a" style="left:654px;top:262px;width:1px;height:15px;background:#d4d0c8"></div>
<div class="a" style="left:722px;top:262px;width:1px;height:15px;background:#d4d0c8"></div>
<div class="a" style="left:757px;top:262px;width:1px;height:15px;background:#d4d0c8"></div>
<div class="a" style="left:825px;top:262px;width:1px;height:15px;background:#d4d0c8"></div>
<div class="a" style="left:887px;top:262px;width:1px;height:15px;background:#d4d0c8"></div>
<div class="a" style="left:912px;top:262px;width:1px;height:15px;background:#d4d0c8"></div>
<div class="a" style="left:937px;top:262px;width:1px;height:15px;background:#d4d0c8"></div>
<div class="a" style="left:962px;top:262px;width:1px;height:15px;background:#d4d0c8"></div>
<div class="a" style="left:1017px;top:262px;width:1px;height:15px;background:#d4d0c8"></div>
<div class="a" style="left:1072px;top:262px;width:1px;height:15px;background:#d4d0c8"></div>
<div class="a" style="left:1137px;top:262px;width:1px;height:15px;background:#d4d0c8"></div>
<div class="a" style="left:1192px;top:262px;width:1px;height:15px;background:#d4d0c8"></div>
<div class="a" style="left:1217px;top:262px;width:1px;height:15px;background:#d4d0c8"></div>
<div class="a" style="left:1277px;top:262px;width:1px;height:15px;background:#d4d0c8"></div>
<div class="a" style="left:1352px;top:262px;width:1px;height:15px;background:#d4d0c8"></div>
<div class="t " style="left:221px;top:264px;color:#000;letter-spacing:-0.25px;width:73px;overflow:hidden">La Romana</div>
<div class="t " style="left:296px;top:264px;color:#000;letter-spacing:-0.4px;width:117px;overflow:hidden">Dreams La Romana R<span style="letter-spacing:0.9px">..</span>.</div>
<div class="t " style="left:416px;top:264px;color:#000;letter-spacing:-0.25px;width:37px;overflow:hidden">5.0</div>
<div class="t " style="left:456px;top:264px;color:#000;letter-spacing:-0.25px;width:72px;overflow:hidden">All Inclusive</div>
<div class="t " style="left:531px;top:264px;color:#000;letter-spacing:-0.25px;width:87px;overflow:hidden">Preferred Club<span style="letter-spacing:0.9px">..</span>.</div>
<div class="t " style="left:621px;top:264px;color:#000;letter-spacing:-0.25px;width:32px;overflow:hidden">Tue</div>
<div class="t " style="left:656px;top:264px;color:#000;letter-spacing:-0.25px;width:65px;overflow:hidden">08/08/2017</div>
<div class="t " style="left:724px;top:264px;color:#000;letter-spacing:-0.25px;width:32px;overflow:hidden">Wed</div>
<div class="t " style="left:759px;top:264px;color:#000;letter-spacing:-0.25px;width:65px;overflow:hidden">16/08/2017</div>
<div class="t " style="left:827px;top:264px;color:#000;letter-spacing:-0.25px;width:59px;overflow:hidden">Get A Bed</div>
<svg style="left:897px;top:264px" width="5" height="5" shape-rendering="crispEdges"><path d="M2 0h1v5h-1z M0 1h1v1h-1z M4 1h1v1h-1z M0 3h1v1h-1z M4 3h1v1h-1z M1 2h3v1h-3z" fill="#000"/></svg>
<div class="t" style="right:586px;top:264px;color:#000">2,256.93</div>
<div class="t" style="right:531px;top:264px;color:#000">752.31</div>
<div class="t" style="right:466px;top:264px;color:#000">2,256.93</div>
<div class="t" style="right:411px;top:264px;color:#000">0.00</div>
<div class="t " style="left:1219px;top:264px;color:#000;letter-spacing:-0.25px;width:57px;overflow:hidden">XML</div>
<div class="a" style="left:220px;top:277px;width:1133px;height:15px;background:#bcdcfa"></div>
<div class="a" style="left:219px;top:291px;width:1370px;height:1px;background:#d4d0c8"></div>
<div class="a" style="left:294px;top:277px;width:1px;height:15px;background:#d4d0c8"></div>
<div class="a" style="left:414px;top:277px;width:1px;height:15px;background:#d4d0c8"></div>
<div class="a" style="left:454px;top:277px;width:1px;height:15px;background:#d4d0c8"></div>
<div class="a" style="left:529px;top:277px;width:1px;height:15px;background:#d4d0c8"></div>
<div class="a" style="left:619px;top:277px;width:1px;height:15px;background:#d4d0c8"></div>
<div class="a" style="left:654px;top:277px;width:1px;height:15px;background:#d4d0c8"></div>
<div class="a" style="left:722px;top:277px;width:1px;height:15px;background:#d4d0c8"></div>
<div class="a" style="left:757px;top:277px;width:1px;height:15px;background:#d4d0c8"></div>
<div class="a" style="left:825px;top:277px;width:1px;height:15px;background:#d4d0c8"></div>
<div class="a" style="left:887px;top:277px;width:1px;height:15px;background:#d4d0c8"></div>
<div class="a" style="left:912px;top:277px;width:1px;height:15px;background:#d4d0c8"></div>
<div class="a" style="left:937px;top:277px;width:1px;height:15px;background:#d4d0c8"></div>
<div class="a" style="left:962px;top:277px;width:1px;height:15px;background:#d4d0c8"></div>
<div class="a" style="left:1017px;top:277px;width:1px;height:15px;background:#d4d0c8"></div>
<div class="a" style="left:1072px;top:277px;width:1px;height:15px;background:#d4d0c8"></div>
<div class="a" style="left:1137px;top:277px;width:1px;height:15px;background:#d4d0c8"></div>
<div class="a" style="left:1192px;top:277px;width:1px;height:15px;background:#d4d0c8"></div>
<div class="a" style="left:1217px;top:277px;width:1px;height:15px;background:#d4d0c8"></div>
<div class="a" style="left:1277px;top:277px;width:1px;height:15px;background:#d4d0c8"></div>
<div class="a" style="left:1352px;top:277px;width:1px;height:15px;background:#d4d0c8"></div>
<div class="t " style="left:221px;top:279px;color:#000;letter-spacing:-0.25px;width:73px;overflow:hidden">La Romana</div>
<div class="t " style="left:296px;top:279px;color:#000;letter-spacing:-0.4px;width:117px;overflow:hidden">Dreams La Romana R<span style="letter-spacing:0.9px">..</span>.</div>
<div class="t " style="left:416px;top:279px;color:#000;letter-spacing:-0.25px;width:37px;overflow:hidden">5.0</div>
<div class="t " style="left:456px;top:279px;color:#000;letter-spacing:-0.25px;width:72px;overflow:hidden">All Inclusive</div>
<div class="t " style="left:531px;top:279px;color:#000;letter-spacing:-0.25px;width:87px;overflow:hidden">Preferred Club<span style="letter-spacing:0.9px">..</span>.</div>
<div class="t " style="left:621px;top:279px;color:#000;letter-spacing:-0.25px;width:32px;overflow:hidden">Tue</div>
<div class="t " style="left:656px;top:279px;color:#000;letter-spacing:-0.25px;width:65px;overflow:hidden">08/08/2017</div>
<div class="t " style="left:724px;top:279px;color:#000;letter-spacing:-0.25px;width:32px;overflow:hidden">Wed</div>
<div class="t " style="left:759px;top:279px;color:#000;letter-spacing:-0.25px;width:65px;overflow:hidden">16/08/2017</div>
<div class="t " style="left:827px;top:279px;color:#000;letter-spacing:-0.25px;width:59px;overflow:hidden">Get A Bed</div>
<svg style="left:897px;top:279px" width="5" height="5" shape-rendering="crispEdges"><path d="M2 0h1v5h-1z M0 1h1v1h-1z M4 1h1v1h-1z M0 3h1v1h-1z M4 3h1v1h-1z M1 2h3v1h-3z" fill="#000"/></svg>
<div class="t" style="right:586px;top:279px;color:#000">2,330.73</div>
<div class="t" style="right:531px;top:279px;color:#000">776.91</div>
<div class="t" style="right:466px;top:279px;color:#000">2,330.73</div>
<div class="t" style="right:411px;top:279px;color:#000">0.00</div>
<div class="t " style="left:1219px;top:279px;color:#000;letter-spacing:-0.25px;width:57px;overflow:hidden">XML</div>
<div class="a" style="left:220px;top:292px;width:1133px;height:15px;background:#bcdcfa"></div>
<div class="a" style="left:219px;top:306px;width:1370px;height:1px;background:#d4d0c8"></div>
<div class="a" style="left:294px;top:292px;width:1px;height:15px;background:#d4d0c8"></div>
<div class="a" style="left:414px;top:292px;width:1px;height:15px;background:#d4d0c8"></div>
<div class="a" style="left:454px;top:292px;width:1px;height:15px;background:#d4d0c8"></div>
<div class="a" style="left:529px;top:292px;width:1px;height:15px;background:#d4d0c8"></div>
<div class="a" style="left:619px;top:292px;width:1px;height:15px;background:#d4d0c8"></div>
<div class="a" style="left:654px;top:292px;width:1px;height:15px;background:#d4d0c8"></div>
<div class="a" style="left:722px;top:292px;width:1px;height:15px;background:#d4d0c8"></div>
<div class="a" style="left:757px;top:292px;width:1px;height:15px;background:#d4d0c8"></div>
<div class="a" style="left:825px;top:292px;width:1px;height:15px;background:#d4d0c8"></div>
<div class="a" style="left:887px;top:292px;width:1px;height:15px;background:#d4d0c8"></div>
<div class="a" style="left:912px;top:292px;width:1px;height:15px;background:#d4d0c8"></div>
<div class="a" style="left:937px;top:292px;width:1px;height:15px;background:#d4d0c8"></div>
<div class="a" style="left:962px;top:292px;width:1px;height:15px;background:#d4d0c8"></div>
<div class="a" style="left:1017px;top:292px;width:1px;height:15px;background:#d4d0c8"></div>
<div class="a" style="left:1072px;top:292px;width:1px;height:15px;background:#d4d0c8"></div>
<div class="a" style="left:1137px;top:292px;width:1px;height:15px;background:#d4d0c8"></div>
<div class="a" style="left:1192px;top:292px;width:1px;height:15px;background:#d4d0c8"></div>
<div class="a" style="left:1217px;top:292px;width:1px;height:15px;background:#d4d0c8"></div>
<div class="a" style="left:1277px;top:292px;width:1px;height:15px;background:#d4d0c8"></div>
<div class="a" style="left:1352px;top:292px;width:1px;height:15px;background:#d4d0c8"></div>
<div class="t " style="left:221px;top:294px;color:#000;letter-spacing:-0.25px;width:73px;overflow:hidden">La Romana</div>
<div class="t " style="left:296px;top:294px;color:#000;letter-spacing:-0.4px;width:117px;overflow:hidden">Dreams La Romana R<span style="letter-spacing:0.9px">..</span>.</div>
<div class="t " style="left:416px;top:294px;color:#000;letter-spacing:-0.25px;width:37px;overflow:hidden">5.0</div>
<div class="t " style="left:456px;top:294px;color:#000;letter-spacing:-0.25px;width:72px;overflow:hidden">All Inclusive</div>
<div class="t " style="left:531px;top:294px;color:#000;letter-spacing:-0.25px;width:87px;overflow:hidden">Preferred Club<span style="letter-spacing:0.9px">..</span>.</div>
<div class="t " style="left:621px;top:294px;color:#000;letter-spacing:-0.25px;width:32px;overflow:hidden">Tue</div>
<div class="t " style="left:656px;top:294px;color:#000;letter-spacing:-0.25px;width:65px;overflow:hidden">08/08/2017</div>
<div class="t " style="left:724px;top:294px;color:#000;letter-spacing:-0.25px;width:32px;overflow:hidden">Wed</div>
<div class="t " style="left:759px;top:294px;color:#000;letter-spacing:-0.25px;width:65px;overflow:hidden">16/08/2017</div>
<div class="t " style="left:827px;top:294px;color:#000;letter-spacing:-0.25px;width:59px;overflow:hidden">Get A Bed</div>
<svg style="left:897px;top:294px" width="5" height="5" shape-rendering="crispEdges"><path d="M2 0h1v5h-1z M0 1h1v1h-1z M4 1h1v1h-1z M0 3h1v1h-1z M4 3h1v1h-1z M1 2h3v1h-3z" fill="#000"/></svg>
<div class="t" style="right:586px;top:294px;color:#000">2,330.73</div>
<div class="t" style="right:531px;top:294px;color:#000">776.91</div>
<div class="t" style="right:466px;top:294px;color:#000">2,330.73</div>
<div class="t" style="right:411px;top:294px;color:#000">0.00</div>
<div class="t " style="left:1219px;top:294px;color:#000;letter-spacing:-0.25px;width:57px;overflow:hidden">XML</div>
<div class="a" style="left:220px;top:307px;width:1133px;height:15px;background:#bcdcfa"></div>
<div class="a" style="left:219px;top:321px;width:1370px;height:1px;background:#d4d0c8"></div>
<div class="a" style="left:294px;top:307px;width:1px;height:15px;background:#d4d0c8"></div>
<div class="a" style="left:414px;top:307px;width:1px;height:15px;background:#d4d0c8"></div>
<div class="a" style="left:454px;top:307px;width:1px;height:15px;background:#d4d0c8"></div>
<div class="a" style="left:529px;top:307px;width:1px;height:15px;background:#d4d0c8"></div>
<div class="a" style="left:619px;top:307px;width:1px;height:15px;background:#d4d0c8"></div>
<div class="a" style="left:654px;top:307px;width:1px;height:15px;background:#d4d0c8"></div>
<div class="a" style="left:722px;top:307px;width:1px;height:15px;background:#d4d0c8"></div>
<div class="a" style="left:757px;top:307px;width:1px;height:15px;background:#d4d0c8"></div>
<div class="a" style="left:825px;top:307px;width:1px;height:15px;background:#d4d0c8"></div>
<div class="a" style="left:887px;top:307px;width:1px;height:15px;background:#d4d0c8"></div>
<div class="a" style="left:912px;top:307px;width:1px;height:15px;background:#d4d0c8"></div>
<div class="a" style="left:937px;top:307px;width:1px;height:15px;background:#d4d0c8"></div>
<div class="a" style="left:962px;top:307px;width:1px;height:15px;background:#d4d0c8"></div>
<div class="a" style="left:1017px;top:307px;width:1px;height:15px;background:#d4d0c8"></div>
<div class="a" style="left:1072px;top:307px;width:1px;height:15px;background:#d4d0c8"></div>
<div class="a" style="left:1137px;top:307px;width:1px;height:15px;background:#d4d0c8"></div>
<div class="a" style="left:1192px;top:307px;width:1px;height:15px;background:#d4d0c8"></div>
<div class="a" style="left:1217px;top:307px;width:1px;height:15px;background:#d4d0c8"></div>
<div class="a" style="left:1277px;top:307px;width:1px;height:15px;background:#d4d0c8"></div>
<div class="a" style="left:1352px;top:307px;width:1px;height:15px;background:#d4d0c8"></div>
<div class="t " style="left:221px;top:309px;color:#000;letter-spacing:-0.25px;width:73px;overflow:hidden">Bayahibe</div>
<div class="t " style="left:296px;top:309px;color:#000;letter-spacing:-0.4px;width:117px;overflow:hidden">Dreams La Romana R<span style="letter-spacing:0.9px">..</span>.</div>
<div class="t " style="left:416px;top:309px;color:#000;letter-spacing:-0.25px;width:37px;overflow:hidden">4*</div>
<div class="t " style="left:456px;top:309px;color:#000;letter-spacing:-0.25px;width:72px;overflow:hidden">Roomonly</div>
<div class="t " style="left:531px;top:309px;color:#000;letter-spacing:-0.25px;width:87px;overflow:hidden">Deluxe, Premiu<span style="letter-spacing:0.9px">..</span>.</div>
<div class="t " style="left:621px;top:309px;color:#000;letter-spacing:-0.25px;width:32px;overflow:hidden">Tue</div>
<div class="t " style="left:656px;top:309px;color:#000;letter-spacing:-0.25px;width:65px;overflow:hidden">08/08/2017</div>
<div class="t " style="left:724px;top:309px;color:#000;letter-spacing:-0.25px;width:32px;overflow:hidden">Wed</div>
<div class="t " style="left:759px;top:309px;color:#000;letter-spacing:-0.25px;width:65px;overflow:hidden">16/08/2017</div>
<div class="t " style="left:827px;top:309px;color:#000;letter-spacing:-0.25px;width:59px;overflow:hidden">Tourico <span style="letter-spacing:0.9px">..</span>.</div>
<div class="t" style="right:586px;top:309px;color:#000">3,510.66</div>
<div class="t" style="right:531px;top:309px;color:#000">1,170.22</div>
<div class="t" style="right:466px;top:309px;color:#000">3,510.66</div>
<div class="t" style="right:411px;top:309px;color:#000">0.00</div>
<div class="t " style="left:1219px;top:309px;color:#000;letter-spacing:-0.25px;width:57px;overflow:hidden">XML</div>
<div class="a" style="left:220px;top:322px;width:1133px;height:15px;background:#bcdcfa"></div>
<div class="a" style="left:219px;top:336px;width:1370px;height:1px;background:#d4d0c8"></div>
<div class="a" style="left:294px;top:322px;width:1px;height:15px;background:#d4d0c8"></div>
<div class="a" style="left:414px;top:322px;width:1px;height:15px;background:#d4d0c8"></div>
<div class="a" style="left:454px;top:322px;width:1px;height:15px;background:#d4d0c8"></div>
<div class="a" style="left:529px;top:322px;width:1px;height:15px;background:#d4d0c8"></div>
<div class="a" style="left:619px;top:322px;width:1px;height:15px;background:#d4d0c8"></div>
<div class="a" style="left:654px;top:322px;width:1px;height:15px;background:#d4d0c8"></div>
<div class="a" style="left:722px;top:322px;width:1px;height:15px;background:#d4d0c8"></div>
<div class="a" style="left:757px;top:322px;width:1px;height:15px;background:#d4d0c8"></div>
<div class="a" style="left:825px;top:322px;width:1px;height:15px;background:#d4d0c8"></div>
<div class="a" style="left:887px;top:322px;width:1px;height:15px;background:#d4d0c8"></div>
<div class="a" style="left:912px;top:322px;width:1px;height:15px;background:#d4d0c8"></div>
<div class="a" style="left:937px;top:322px;width:1px;height:15px;background:#d4d0c8"></div>
<div class="a" style="left:962px;top:322px;width:1px;height:15px;background:#d4d0c8"></div>
<div class="a" style="left:1017px;top:322px;width:1px;height:15px;background:#d4d0c8"></div>
<div class="a" style="left:1072px;top:322px;width:1px;height:15px;background:#d4d0c8"></div>
<div class="a" style="left:1137px;top:322px;width:1px;height:15px;background:#d4d0c8"></div>
<div class="a" style="left:1192px;top:322px;width:1px;height:15px;background:#d4d0c8"></div>
<div class="a" style="left:1217px;top:322px;width:1px;height:15px;background:#d4d0c8"></div>
<div class="a" style="left:1277px;top:322px;width:1px;height:15px;background:#d4d0c8"></div>
<div class="a" style="left:1352px;top:322px;width:1px;height:15px;background:#d4d0c8"></div>
<div class="t " style="left:221px;top:324px;color:#000;letter-spacing:-0.25px;width:73px;overflow:hidden">Bayahibe</div>
<div class="t " style="left:296px;top:324px;color:#000;letter-spacing:-0.4px;width:117px;overflow:hidden">Dreams La Romana R<span style="letter-spacing:0.9px">..</span>.</div>
<div class="t " style="left:416px;top:324px;color:#000;letter-spacing:-0.25px;width:37px;overflow:hidden">4*</div>
<div class="t " style="left:456px;top:324px;color:#000;letter-spacing:-0.25px;width:72px;overflow:hidden">Roomonly</div>
<div class="t " style="left:531px;top:324px;color:#000;letter-spacing:-0.25px;width:87px;overflow:hidden">Standard, Pre<span style="letter-spacing:0.9px">..</span>.</div>
<div class="t " style="left:621px;top:324px;color:#000;letter-spacing:-0.25px;width:32px;overflow:hidden">Tue</div>
<div class="t " style="left:656px;top:324px;color:#000;letter-spacing:-0.25px;width:65px;overflow:hidden">08/08/2017</div>
<div class="t " style="left:724px;top:324px;color:#000;letter-spacing:-0.25px;width:32px;overflow:hidden">Wed</div>
<div class="t " style="left:759px;top:324px;color:#000;letter-spacing:-0.25px;width:65px;overflow:hidden">16/08/2017</div>
<div class="t " style="left:827px;top:324px;color:#000;letter-spacing:-0.25px;width:59px;overflow:hidden">Tourico <span style="letter-spacing:0.9px">..</span>.</div>
<div class="t" style="right:586px;top:324px;color:#000">3,859.36</div>
<div class="t" style="right:531px;top:324px;color:#000">1,286.45</div>
<div class="t" style="right:466px;top:324px;color:#000">3,859.36</div>
<div class="t" style="right:411px;top:324px;color:#000">0.00</div>
<div class="t " style="left:1219px;top:324px;color:#000;letter-spacing:-0.25px;width:57px;overflow:hidden">XML</div>
<div class="a" style="left:220px;top:337px;width:1133px;height:15px;background:#bcdcfa"></div>
<div class="a" style="left:219px;top:351px;width:1370px;height:1px;background:#d4d0c8"></div>
<div class="a" style="left:294px;top:337px;width:1px;height:15px;background:#d4d0c8"></div>
<div class="a" style="left:414px;top:337px;width:1px;height:15px;background:#d4d0c8"></div>
<div class="a" style="left:454px;top:337px;width:1px;height:15px;background:#d4d0c8"></div>
<div class="a" style="left:529px;top:337px;width:1px;height:15px;background:#d4d0c8"></div>
<div class="a" style="left:619px;top:337px;width:1px;height:15px;background:#d4d0c8"></div>
<div class="a" style="left:654px;top:337px;width:1px;height:15px;background:#d4d0c8"></div>
<div class="a" style="left:722px;top:337px;width:1px;height:15px;background:#d4d0c8"></div>
<div class="a" style="left:757px;top:337px;width:1px;height:15px;background:#d4d0c8"></div>
<div class="a" style="left:825px;top:337px;width:1px;height:15px;background:#d4d0c8"></div>
<div class="a" style="left:887px;top:337px;width:1px;height:15px;background:#d4d0c8"></div>
<div class="a" style="left:912px;top:337px;width:1px;height:15px;background:#d4d0c8"></div>
<div class="a" style="left:937px;top:337px;width:1px;height:15px;background:#d4d0c8"></div>
<div class="a" style="left:962px;top:337px;width:1px;height:15px;background:#d4d0c8"></div>
<div class="a" style="left:1017px;top:337px;width:1px;height:15px;background:#d4d0c8"></div>
<div class="a" style="left:1072px;top:337px;width:1px;height:15px;background:#d4d0c8"></div>
<div class="a" style="left:1137px;top:337px;width:1px;height:15px;background:#d4d0c8"></div>
<div class="a" style="left:1192px;top:337px;width:1px;height:15px;background:#d4d0c8"></div>
<div class="a" style="left:1217px;top:337px;width:1px;height:15px;background:#d4d0c8"></div>
<div class="a" style="left:1277px;top:337px;width:1px;height:15px;background:#d4d0c8"></div>
<div class="a" style="left:1352px;top:337px;width:1px;height:15px;background:#d4d0c8"></div>
<div class="t " style="left:221px;top:339px;color:#000;letter-spacing:-0.25px;width:73px;overflow:hidden">Bayahibe</div>
<div class="t " style="left:296px;top:339px;color:#000;letter-spacing:-0.4px;width:117px;overflow:hidden">Dreams La Romana R<span style="letter-spacing:0.9px">..</span>.</div>
<div class="t " style="left:416px;top:339px;color:#000;letter-spacing:-0.25px;width:37px;overflow:hidden">4*</div>
<div class="t " style="left:456px;top:339px;color:#000;letter-spacing:-0.25px;width:72px;overflow:hidden">Roomonly</div>
<div class="t " style="left:531px;top:339px;color:#000;letter-spacing:-0.25px;width:87px;overflow:hidden">Standard, Pref<span style="letter-spacing:0.9px">..</span>.</div>
<div class="t " style="left:621px;top:339px;color:#000;letter-spacing:-0.25px;width:32px;overflow:hidden">Tue</div>
<div class="t " style="left:656px;top:339px;color:#000;letter-spacing:-0.25px;width:65px;overflow:hidden">08/08/2017</div>
<div class="t " style="left:724px;top:339px;color:#000;letter-spacing:-0.25px;width:32px;overflow:hidden">Wed</div>
<div class="t " style="left:759px;top:339px;color:#000;letter-spacing:-0.25px;width:65px;overflow:hidden">16/08/2017</div>
<div class="t " style="left:827px;top:339px;color:#000;letter-spacing:-0.25px;width:59px;overflow:hidden">Tourico <span style="letter-spacing:0.9px">..</span>.</div>
<div class="t" style="right:586px;top:339px;color:#000">4,741.70</div>
<div class="t" style="right:531px;top:339px;color:#000">1,580.57</div>
<div class="t" style="right:466px;top:339px;color:#000">4,741.70</div>
<div class="t" style="right:411px;top:339px;color:#000">0.00</div>
<div class="t " style="left:1219px;top:339px;color:#000;letter-spacing:-0.25px;width:57px;overflow:hidden">XML</div>
<div class="a" style="left:220px;top:352px;width:1133px;height:15px;background:#bcdcfa"></div>
<div class="a" style="left:219px;top:366px;width:1370px;height:1px;background:#d4d0c8"></div>
<div class="a" style="left:294px;top:352px;width:1px;height:15px;background:#d4d0c8"></div>
<div class="a" style="left:414px;top:352px;width:1px;height:15px;background:#d4d0c8"></div>
<div class="a" style="left:454px;top:352px;width:1px;height:15px;background:#d4d0c8"></div>
<div class="a" style="left:529px;top:352px;width:1px;height:15px;background:#d4d0c8"></div>
<div class="a" style="left:619px;top:352px;width:1px;height:15px;background:#d4d0c8"></div>
<div class="a" style="left:654px;top:352px;width:1px;height:15px;background:#d4d0c8"></div>
<div class="a" style="left:722px;top:352px;width:1px;height:15px;background:#d4d0c8"></div>
<div class="a" style="left:757px;top:352px;width:1px;height:15px;background:#d4d0c8"></div>
<div class="a" style="left:825px;top:352px;width:1px;height:15px;background:#d4d0c8"></div>
<div class="a" style="left:887px;top:352px;width:1px;height:15px;background:#d4d0c8"></div>
<div class="a" style="left:912px;top:352px;width:1px;height:15px;background:#d4d0c8"></div>
<div class="a" style="left:937px;top:352px;width:1px;height:15px;background:#d4d0c8"></div>
<div class="a" style="left:962px;top:352px;width:1px;height:15px;background:#d4d0c8"></div>
<div class="a" style="left:1017px;top:352px;width:1px;height:15px;background:#d4d0c8"></div>
<div class="a" style="left:1072px;top:352px;width:1px;height:15px;background:#d4d0c8"></div>
<div class="a" style="left:1137px;top:352px;width:1px;height:15px;background:#d4d0c8"></div>
<div class="a" style="left:1192px;top:352px;width:1px;height:15px;background:#d4d0c8"></div>
<div class="a" style="left:1217px;top:352px;width:1px;height:15px;background:#d4d0c8"></div>
<div class="a" style="left:1277px;top:352px;width:1px;height:15px;background:#d4d0c8"></div>
<div class="a" style="left:1352px;top:352px;width:1px;height:15px;background:#d4d0c8"></div>
<div class="t " style="left:221px;top:354px;color:#000;letter-spacing:-0.25px;width:73px;overflow:hidden">Bayahibe</div>
<div class="t " style="left:296px;top:354px;color:#000;letter-spacing:-0.4px;width:117px;overflow:hidden">Dreams La Romana R<span style="letter-spacing:0.9px">..</span>.</div>
<div class="t " style="left:416px;top:354px;color:#000;letter-spacing:-0.25px;width:37px;overflow:hidden">4*</div>
<div class="t " style="left:456px;top:354px;color:#000;letter-spacing:-0.25px;width:72px;overflow:hidden">Roomonly</div>
<div class="t " style="left:531px;top:354px;color:#000;letter-spacing:-0.25px;width:87px;overflow:hidden">Standard, Pref<span style="letter-spacing:0.9px">..</span>.</div>
<div class="t " style="left:621px;top:354px;color:#000;letter-spacing:-0.25px;width:32px;overflow:hidden">Tue</div>
<div class="t " style="left:656px;top:354px;color:#000;letter-spacing:-0.25px;width:65px;overflow:hidden">08/08/2017</div>
<div class="t " style="left:724px;top:354px;color:#000;letter-spacing:-0.25px;width:32px;overflow:hidden">Wed</div>
<div class="t " style="left:759px;top:354px;color:#000;letter-spacing:-0.25px;width:65px;overflow:hidden">16/08/2017</div>
<div class="t " style="left:827px;top:354px;color:#000;letter-spacing:-0.25px;width:59px;overflow:hidden">Tourico <span style="letter-spacing:0.9px">..</span>.</div>
<div class="t" style="right:586px;top:354px;color:#000">4,935.44</div>
<div class="t" style="right:531px;top:354px;color:#000">1,645.15</div>
<div class="t" style="right:466px;top:354px;color:#000">4,935.44</div>
<div class="t" style="right:411px;top:354px;color:#000">0.00</div>
<div class="t " style="left:1219px;top:354px;color:#000;letter-spacing:-0.25px;width:57px;overflow:hidden">XML</div>
<div class="a" style="left:220px;top:367px;width:1133px;height:15px;background:#bcdcfa"></div>
<div class="a" style="left:219px;top:381px;width:1370px;height:1px;background:#d4d0c8"></div>
<div class="a" style="left:294px;top:367px;width:1px;height:15px;background:#d4d0c8"></div>
<div class="a" style="left:414px;top:367px;width:1px;height:15px;background:#d4d0c8"></div>
<div class="a" style="left:454px;top:367px;width:1px;height:15px;background:#d4d0c8"></div>
<div class="a" style="left:529px;top:367px;width:1px;height:15px;background:#d4d0c8"></div>
<div class="a" style="left:619px;top:367px;width:1px;height:15px;background:#d4d0c8"></div>
<div class="a" style="left:654px;top:367px;width:1px;height:15px;background:#d4d0c8"></div>
<div class="a" style="left:722px;top:367px;width:1px;height:15px;background:#d4d0c8"></div>
<div class="a" style="left:757px;top:367px;width:1px;height:15px;background:#d4d0c8"></div>
<div class="a" style="left:825px;top:367px;width:1px;height:15px;background:#d4d0c8"></div>
<div class="a" style="left:887px;top:367px;width:1px;height:15px;background:#d4d0c8"></div>
<div class="a" style="left:912px;top:367px;width:1px;height:15px;background:#d4d0c8"></div>
<div class="a" style="left:937px;top:367px;width:1px;height:15px;background:#d4d0c8"></div>
<div class="a" style="left:962px;top:367px;width:1px;height:15px;background:#d4d0c8"></div>
<div class="a" style="left:1017px;top:367px;width:1px;height:15px;background:#d4d0c8"></div>
<div class="a" style="left:1072px;top:367px;width:1px;height:15px;background:#d4d0c8"></div>
<div class="a" style="left:1137px;top:367px;width:1px;height:15px;background:#d4d0c8"></div>
<div class="a" style="left:1192px;top:367px;width:1px;height:15px;background:#d4d0c8"></div>
<div class="a" style="left:1217px;top:367px;width:1px;height:15px;background:#d4d0c8"></div>
<div class="a" style="left:1277px;top:367px;width:1px;height:15px;background:#d4d0c8"></div>
<div class="a" style="left:1352px;top:367px;width:1px;height:15px;background:#d4d0c8"></div>
<div class="t " style="left:221px;top:369px;color:#000;letter-spacing:-0.25px;width:73px;overflow:hidden">Bayahibe</div>
<div class="t " style="left:296px;top:369px;color:#000;letter-spacing:-0.4px;width:117px;overflow:hidden">Dreams La Romana R<span style="letter-spacing:0.9px">..</span>.</div>
<div class="t " style="left:416px;top:369px;color:#000;letter-spacing:-0.25px;width:37px;overflow:hidden">4*</div>
<div class="t " style="left:456px;top:369px;color:#000;letter-spacing:-0.25px;width:72px;overflow:hidden">Roomonly</div>
<div class="t " style="left:531px;top:369px;color:#000;letter-spacing:-0.25px;width:87px;overflow:hidden">Standard, Pref<span style="letter-spacing:0.9px">..</span>.</div>
<div class="t " style="left:621px;top:369px;color:#000;letter-spacing:-0.25px;width:32px;overflow:hidden">Tue</div>
<div class="t " style="left:656px;top:369px;color:#000;letter-spacing:-0.25px;width:65px;overflow:hidden">08/08/2017</div>
<div class="t " style="left:724px;top:369px;color:#000;letter-spacing:-0.25px;width:32px;overflow:hidden">Wed</div>
<div class="t " style="left:759px;top:369px;color:#000;letter-spacing:-0.25px;width:65px;overflow:hidden">16/08/2017</div>
<div class="t " style="left:827px;top:369px;color:#000;letter-spacing:-0.25px;width:59px;overflow:hidden">Tourico <span style="letter-spacing:0.9px">..</span>.</div>
<div class="t" style="right:586px;top:369px;color:#000">5,107.60</div>
<div class="t" style="right:531px;top:369px;color:#000">1,702.53</div>
<div class="t" style="right:466px;top:369px;color:#000">5,107.60</div>
<div class="t" style="right:411px;top:369px;color:#000">0.00</div>
<div class="t " style="left:1219px;top:369px;color:#000;letter-spacing:-0.25px;width:57px;overflow:hidden">XML</div>
<div class="a" style="left:220px;top:382px;width:1133px;height:15px;background:#bcdcfa"></div>
<div class="a" style="left:219px;top:396px;width:1370px;height:1px;background:#d4d0c8"></div>
<div class="a" style="left:294px;top:382px;width:1px;height:15px;background:#d4d0c8"></div>
<div class="a" style="left:414px;top:382px;width:1px;height:15px;background:#d4d0c8"></div>
<div class="a" style="left:454px;top:382px;width:1px;height:15px;background:#d4d0c8"></div>
<div class="a" style="left:529px;top:382px;width:1px;height:15px;background:#d4d0c8"></div>
<div class="a" style="left:619px;top:382px;width:1px;height:15px;background:#d4d0c8"></div>
<div class="a" style="left:654px;top:382px;width:1px;height:15px;background:#d4d0c8"></div>
<div class="a" style="left:722px;top:382px;width:1px;height:15px;background:#d4d0c8"></div>
<div class="a" style="left:757px;top:382px;width:1px;height:15px;background:#d4d0c8"></div>
<div class="a" style="left:825px;top:382px;width:1px;height:15px;background:#d4d0c8"></div>
<div class="a" style="left:887px;top:382px;width:1px;height:15px;background:#d4d0c8"></div>
<div class="a" style="left:912px;top:382px;width:1px;height:15px;background:#d4d0c8"></div>
<div class="a" style="left:937px;top:382px;width:1px;height:15px;background:#d4d0c8"></div>
<div class="a" style="left:962px;top:382px;width:1px;height:15px;background:#d4d0c8"></div>
<div class="a" style="left:1017px;top:382px;width:1px;height:15px;background:#d4d0c8"></div>
<div class="a" style="left:1072px;top:382px;width:1px;height:15px;background:#d4d0c8"></div>
<div class="a" style="left:1137px;top:382px;width:1px;height:15px;background:#d4d0c8"></div>
<div class="a" style="left:1192px;top:382px;width:1px;height:15px;background:#d4d0c8"></div>
<div class="a" style="left:1217px;top:382px;width:1px;height:15px;background:#d4d0c8"></div>
<div class="a" style="left:1277px;top:382px;width:1px;height:15px;background:#d4d0c8"></div>
<div class="a" style="left:1352px;top:382px;width:1px;height:15px;background:#d4d0c8"></div>
<div class="t " style="left:221px;top:384px;color:#000;letter-spacing:-0.25px;width:73px;overflow:hidden">Bayahibe</div>
<div class="t " style="left:296px;top:384px;color:#000;letter-spacing:-0.4px;width:117px;overflow:hidden">Dreams La Romana R<span style="letter-spacing:0.9px">..</span>.</div>
<div class="t " style="left:416px;top:384px;color:#000;letter-spacing:-0.25px;width:37px;overflow:hidden">4*</div>
<div class="t " style="left:456px;top:384px;color:#000;letter-spacing:-0.25px;width:72px;overflow:hidden">Roomonly</div>
<div class="t " style="left:531px;top:384px;color:#000;letter-spacing:-0.25px;width:87px;overflow:hidden">Standard, Pref<span style="letter-spacing:0.9px">..</span>.</div>
<div class="t " style="left:621px;top:384px;color:#000;letter-spacing:-0.25px;width:32px;overflow:hidden">Tue</div>
<div class="t " style="left:656px;top:384px;color:#000;letter-spacing:-0.25px;width:65px;overflow:hidden">08/08/2017</div>
<div class="t " style="left:724px;top:384px;color:#000;letter-spacing:-0.25px;width:32px;overflow:hidden">Wed</div>
<div class="t " style="left:759px;top:384px;color:#000;letter-spacing:-0.25px;width:65px;overflow:hidden">16/08/2017</div>
<div class="t " style="left:827px;top:384px;color:#000;letter-spacing:-0.25px;width:59px;overflow:hidden">Tourico <span style="letter-spacing:0.9px">..</span>.</div>
<div class="t" style="right:586px;top:384px;color:#000">5,107.60</div>
<div class="t" style="right:531px;top:384px;color:#000">1,702.53</div>
<div class="t" style="right:466px;top:384px;color:#000">5,107.60</div>
<div class="t" style="right:411px;top:384px;color:#000">0.00</div>
<div class="t " style="left:1219px;top:384px;color:#000;letter-spacing:-0.25px;width:57px;overflow:hidden">XML</div>
<div class="a" style="left:529px;top:172px;width:151px;height:16px;background:#ffffe1;border:1px solid #000"></div>
<div class="t " style="left:530px;top:175px;letter-spacing:-0.25px">Premium Deluxe, Garden View</div>
<svg style="left:1034px;top:86px" width="14" height="12"><path d="M1 1 H12 L6.5 10Z" fill="#8a8a8a"/><path d="M5 2 H8 L6.5 5Z" fill="#b0b0b0"/></svg>
<div class="t " style="left:1028px;top:102px;color:#a0a0a0;text-shadow:1px 1px 0 #fff;letter-spacing:-0.2px">More</div>
<svg style="left:1068px;top:86px" width="10" height="10"><rect x="0.5" y="0.5" width="8" height="8" fill="#8a8a8a"/><rect x="2" y="2" width="2" height="2" fill="#c8c8c8"/></svg>
<div class="t " style="left:1062px;top:102px;color:#a0a0a0;text-shadow:1px 1px 0 #fff;letter-spacing:-0.2px">Stop</div>
<div class="a" style="left:1091px;top:80px;width:106px;height:36px;border:1px solid;border-color:#808080 #fff #fff #808080;background-color:#e4e4e4;background-image:repeating-conic-gradient(#f4f4f4 0 25%,#d8d8d8 0 50%);background-size:2px 2px"></div>
<svg style="left:1138px;top:83px" width="14" height="16"><defs><linearGradient id="fg1138" x1="0" x2="1"><stop offset="0" stop-color="#f8f8f8"/><stop offset="0.45" stop-color="#a8a8a8"/><stop offset="1" stop-color="#e0e0e0"/></linearGradient></defs><path d="M0.5 2.5 Q6 6.5 11.5 2.5 L7.5 9 L4.5 9Z" fill="url(#fg1138)"/><ellipse cx="6" cy="2.5" rx="5.5" ry="2" fill="#e8e8e8" stroke="#909090" stroke-width="0.8"/><rect x="5" y="8.5" width="2" height="7" fill="#a8a8a8"/></svg>
<div class="t" style="left:1091px;width:106px;text-align:center;top:102px;letter-spacing:-0.3px">Accomm Name Filter</div>
<div class="a" style="left:1198px;top:80px;width:101px;height:36px;border:1px solid;border-color:#808080 #fff #fff #808080;background-color:#e4e4e4;background-image:repeating-conic-gradient(#f4f4f4 0 25%,#d8d8d8 0 50%);background-size:2px 2px"></div>
<svg style="left:1242px;top:83px" width="14" height="16"><defs><linearGradient id="fg1242" x1="0" x2="1"><stop offset="0" stop-color="#f8f8f8"/><stop offset="0.45" stop-color="#a8a8a8"/><stop offset="1" stop-color="#e0e0e0"/></linearGradient></defs><path d="M0.5 2.5 Q6 6.5 11.5 2.5 L7.5 9 L4.5 9Z" fill="url(#fg1242)"/><ellipse cx="6" cy="2.5" rx="5.5" ry="2" fill="#e8e8e8" stroke="#909090" stroke-width="0.8"/><rect x="5" y="8.5" width="2" height="7" fill="#a8a8a8"/></svg>
<div class="t" style="left:1198px;width:101px;text-align:center;top:102px;letter-spacing:-0.3px">Rooms Group Filter</div>
<svg style="left:1333px;top:83px" width="14" height="16"><defs><linearGradient id="fg1333" x1="0" x2="1"><stop offset="0" stop-color="#f8f8f8"/><stop offset="0.45" stop-color="#a8a8a8"/><stop offset="1" stop-color="#e0e0e0"/></linearGradient></defs><path d="M0.5 2.5 Q6 6.5 11.5 2.5 L7.5 9 L4.5 9Z" fill="url(#fg1333)"/><ellipse cx="6" cy="2.5" rx="5.5" ry="2" fill="#e8e8e8" stroke="#909090" stroke-width="0.8"/><rect x="5" y="8.5" width="2" height="7" fill="#a8a8a8"/></svg>
<div class="t " style="left:1305px;top:102px;letter-spacing:-0.3px">Facilities Filter</div>
<div class="a" style="left:1381px;top:82px;width:1px;height:32px;background:#808080"></div>
<div class="a" style="left:1382px;top:82px;width:1px;height:32px;background:#fff"></div>
<svg style="left:1398px;top:83px" width="16" height="16" viewBox="0 0 16 16"><path d="M0.5 3.5 H12.5 L11.5 9.5 H2.5Z" fill="none" stroke="#707070" stroke-width="1"/><path d="M3.5 4 V9 M5.5 4 V9 M7.5 4 V9 M9.5 4 V9 M11.5 4 V9" stroke="#808080" stroke-width="1"/><path d="M12.5 3.5 L13.5 0.5 H15.5" stroke="#707070" fill="none" stroke-width="1.1"/><path d="M11.5 9.5 L10.5 12 H3" stroke="#707070" fill="none"/><circle cx="3.5" cy="14" r="1.6" fill="#fff" stroke="#e82020" stroke-width="1.2"/><circle cx="9.5" cy="14" r="1.6" fill="#fff" stroke="#e82020" stroke-width="1.2"/></svg>
<div class="t " style="left:1390px;top:102px;letter-spacing:-0.2px">Basket</div>
<svg style="left:1450px;top:83px" width="16" height="16" viewBox="0 0 16 16"><path d="M2 6 Q1 2 5 1 Q8 0 10 1.5 Q13 3 11.5 6 Q10 8.5 6 8.5 Q3 8.5 2 6Z" fill="#88c050" stroke="#509020" stroke-width="0.8"/><path d="M4 4 Q6 2.5 9 3.5" stroke="#c0e8a0" fill="none" stroke-width="1"/><path d="M0.5 10 H9" stroke="#509020" stroke-width="1"/><rect x="1" y="11" width="3.5" height="1.8" fill="#f01818"/><rect x="5" y="6" width="4" height="3.5" fill="#f01818"/><rect x="10" y="12" width="5" height="4" rx="1" fill="#f01818"/><path d="M11.5 5 L14.5 5 L8 15.5 L5 15.5Z" fill="#f01818"/></svg>
<div class="t " style="left:1433px;top:102px;letter-spacing:-0.3px">Nett Price</div>
<div class="a" style="left:1490px;top:82px;width:1px;height:32px;background:#808080"></div>
<div class="a" style="left:1491px;top:82px;width:1px;height:32px;background:#fff"></div>
<svg style="left:1513px;top:83px" width="16" height="16" viewBox="0 0 16 16"><circle cx="9" cy="8.5" r="6.3" fill="#f0f8ff" stroke="#4890c8" stroke-width="1.3"/><circle cx="9" cy="8.5" r="4.8" fill="none" stroke="#a8d8f0" stroke-width="0.8"/><path d="M5.5 4.5 L10 7.8 L8.6 9.2Z" fill="#2060d0"/><path d="M12.5 12.5 L8.6 9.2 L10 7.8Z" fill="#e82020"/><path d="M1 3 L3 0.5 L5.5 2.5 L3.5 5Z" fill="#8a5a28"/><path d="M12.5 14 L14.5 11.5 L16 13.5 L14 16Z" fill="#8a5a28"/></svg>
<div class="t " style="left:1499px;top:102px;letter-spacing:-0.25px">Navigate</div>
<svg style="left:1559px;top:83px" width="16" height="16" viewBox="0 0 16 16"><path d="M2 4 L4 2 L8 6 L12 2 L14 4 L10 8 L14 12 L12 14 L8 10 L4 14 L2 12 L6 8Z" fill="#e82828" stroke="#b01010" stroke-width="0.5"/></svg>
<div class="t " style="left:1553px;top:102px;letter-spacing:-0.2px">Close</div>
<div class="t " style="left:222px;top:784px;letter-spacing:0.05px">First portion: 5.9 sec, total search time: 6.1 sec</div>
<div class="a" style="left:1560px;top:778px;width:24px;height:22px;background:#d4d0c8;border:1px solid;border-color:#fff #404040 #404040 #fff;box-shadow:inset -1px -1px 0 #808080"></div>
<svg style="left:1566px;top:782px" width="12" height="14"><circle cx="6" cy="2" r="1.6" fill="#1050a8"/><path d="M3.5 5 H7.5 V11 H9 V13 H3 V11 H4.5 V7 H3.5Z" fill="#1050a8"/></svg>
<div class="a" style="left:215px;top:805px;width:1378px;height:1px;background:#808080"></div>
<div class="a" style="left:213px;top:806px;width:55px;height:17px;background:#d4d0c8;border-right:1px solid #909090"></div>
<div class="t " style="left:217px;top:809px;color:#000;letter-spacing:-0.3px">Summary</div>
<div class="a" style="left:268px;top:806px;width:41px;height:17px;background:#d4d0c8;border-right:1px solid #909090"></div>
<div class="t " style="left:271px;top:809px;color:#000;letter-spacing:-0.3px">Search</div>
<div class="a" style="left:309px;top:806px;width:98px;height:17px;background:#ccffcc;border-right:1px solid #909090"></div>
<div class="t " style="left:312px;top:809px;color:#000;letter-spacing:-0.3px">Acc 1A,2C,1I MCO</div>
<div class="a" style="left:407px;top:806px;width:51px;height:17px;background:#ccffcc;border-right:1px solid #909090"></div>
<div class="t " style="left:410px;top:809px;color:#000;letter-spacing:-0.3px">Car MCO</div>
<div class="a" style="left:458px;top:806px;width:84px;height:17px;background:#c4c4ff;border-right:1px solid #909090"></div>
<div class="t " style="left:461px;top:809px;color:#000;letter-spacing:-0.3px">Acc 2A,1C MCO</div>
<div class="a" style="left:542px;top:806px;width:67px;height:17px;background:#c4c4ff;border-right:1px solid #909090"></div>
<div class="t " style="left:545px;top:809px;color:#000;letter-spacing:-0.3px">Acc 3A MCO</div>
<div class="a" style="left:609px;top:806px;width:84px;height:17px;background:#c4c4ff;border-right:1px solid #909090"></div>
<div class="t " style="left:612px;top:809px;color:#000;letter-spacing:-0.3px">Acc 5A,1C MCO</div>
<div class="a" style="left:693px;top:806px;width:80px;height:17px;background:#ccffcc;border-right:1px solid #909090"></div>
<div class="t " style="left:696px;top:809px;color:#000;letter-spacing:-0.3px">Acc 2A,1C PUJ</div>
<div class="a" style="left:773px;top:805px;width:59px;height:18px;background:#008000;border-radius:0 0 3px 3px;border:1px solid #606060;border-top:none"></div>
<div class="t " style="left:776px;top:809px;color:#fff;letter-spacing:-0.3px">Acc 3A PUJ</div>
<div class="a" style="left:833px;top:806px;width:79px;height:17px;background:#ccffcc;border-right:1px solid #909090"></div>
<div class="t " style="left:836px;top:809px;color:#000;letter-spacing:-0.3px">Acc 5A,1C PUJ</div>
<div class="a" style="left:912px;top:806px;width:96px;height:17px;background:#d4d0c8;border-right:1px solid #909090"></div>
<div class="t " style="left:915px;top:809px;color:#000;letter-spacing:-0.3px">Financial Summary</div>
<div class="a" style="left:213px;top:823px;width:1382px;height:2px;background:#a6caf0"></div>
<div class="t " style="left:782px;top:833px;letter-spacing:-0.15px">User: 338 - Robert Comer</div>
<div class="t " style="left:916px;top:833px;letter-spacing:-0.2px">Retailer: 'Ocean-Florida'</div>
<div class="t " style="left:1043px;top:833px;letter-spacing:-0.2px">Client: none</div>
<div class="t" style="right:9px;top:833px;letter-spacing:-0.4px">21:20 GMT</div>
<div class="a" style="left:0px;top:858px;width:1600px;height:1px;background:#404040"></div>
<div class="a" style="left:0px;top:859px;width:1600px;height:1px;background:#606060"></div>
<div class="a" style="left:0px;top:860px;width:1600px;height:40px;background:#d4d0c8"></div>
<div class="a" style="left:2px;top:860px;width:52px;height:38px;border:1px solid;border-color:#fff #404040 #404040 #fff;box-shadow:inset -1px -1px 0 #808080"></div>
<svg style="left:4px;top:870px" width="16" height="14"><path d="M2 3 Q4 1.5 7 2.5 L6 7 Q3.5 6 1 7Z" fill="#f04818"/><path d="M8 2.5 Q11 3.5 14 2 L13 6.5 Q10 8 7 7Z" fill="#40b030"/><path d="M1 8 Q3.5 7 6 8 L5 12.5 Q2.5 11.5 0 12.5Z" fill="#2880e0"/><path d="M7 8 Q10 9 13 7.5 L12 12 Q9 13.5 6 12.5Z" fill="#f8c020"/></svg>
<div class="t b" style="left:21px;top:873px;font-size:12px;line-height:12px;letter-spacing:0.3px">Start</div>
<div class="a" style="left:64px;top:860px;width:159px;height:38px;border:1px solid;border-color:#404040 #fff #fff #404040;box-shadow:inset 1px 1px 0 #808080;background:#fff"></div>
<svg style="left:69px;top:869px" width="28" height="20"><defs><linearGradient id="apg" x1="0" y1="0" x2="0.6" y2="1"><stop offset="0" stop-color="#ffe050"/><stop offset="0.5" stop-color="#f0a020"/><stop offset="1" stop-color="#c04010"/></linearGradient></defs><path d="M1 7 L5 1 L13 2 L27 7 L18 14 L13 19 Z" fill="url(#apg)"/></svg>
<div class="t b" style="left:103px;top:874px;letter-spacing:0.5px">Interactive - Ocea<span style="letter-spacing:0.9px">..</span>.</div>
<div class="a" style="left:1408px;top:860px;width:190px;height:38px;border:1px solid;border-color:#808080 #fff #fff #808080"></div>
<svg style="left:1415px;top:870px" width="180" height="20"><rect x="0" y="1" width="7" height="7" fill="#f09020"/><rect x="7" y="1" width="8" height="7" fill="#2070c0"/><rect x="0" y="8" width="8" height="8" fill="#48a030"/><rect x="8" y="8" width="7" height="8" fill="#e03020"/><rect x="24" y="5" width="15" height="6" fill="#60c040" stroke="#306020" stroke-width="0.8"/><rect x="27" y="11" width="6" height="2" fill="#e0c020"/><path d="M39 4 V14 M39 5 H42" stroke="#202020" stroke-width="1.2"/><rect x="51" y="3" width="12" height="10" fill="#c0c0c0" stroke="#707070"/><rect x="53" y="5" width="8" height="6" fill="#d8d8d8"/><path d="M48 1 V16 H60" stroke="#606060" fill="none" stroke-width="1.4"/><path d="M47 1 V4 M49 1 V4" stroke="#606060"/><path d="M72.5 6 H75.5 L79.5 1.5 V15 L75.5 10.5 H72.5Z" fill="#f0f0f0" stroke="#808080" stroke-width="1"/><path d="M73 6.5 H75.5 V10 H73Z" fill="#c8c8c8"/><circle cx="82" cy="12.5" r="3.8" fill="#e02828"/><circle cx="82" cy="12.5" r="3.8" fill="none" stroke="#fff" stroke-width="0.5"/><path d="M80.4 10.9 L83.6 14.1 M83.6 10.9 L80.4 14.1" stroke="#fff" stroke-width="1.3"/><rect x="165" y="3" width="15" height="12" fill="#2060c0" stroke="#80a0d0" stroke-width="0.8"/><rect x="168" y="11" width="11" height="2" fill="#101828"/><circle cx="167" cy="12" r="1.2" fill="#f08020"/></svg>
<div class="t " style="left:1531px;top:866px;">21:20</div>
<div class="t " style="left:1517px;top:882px;letter-spacing:0px">31/08/2016</div>
</body></html>
